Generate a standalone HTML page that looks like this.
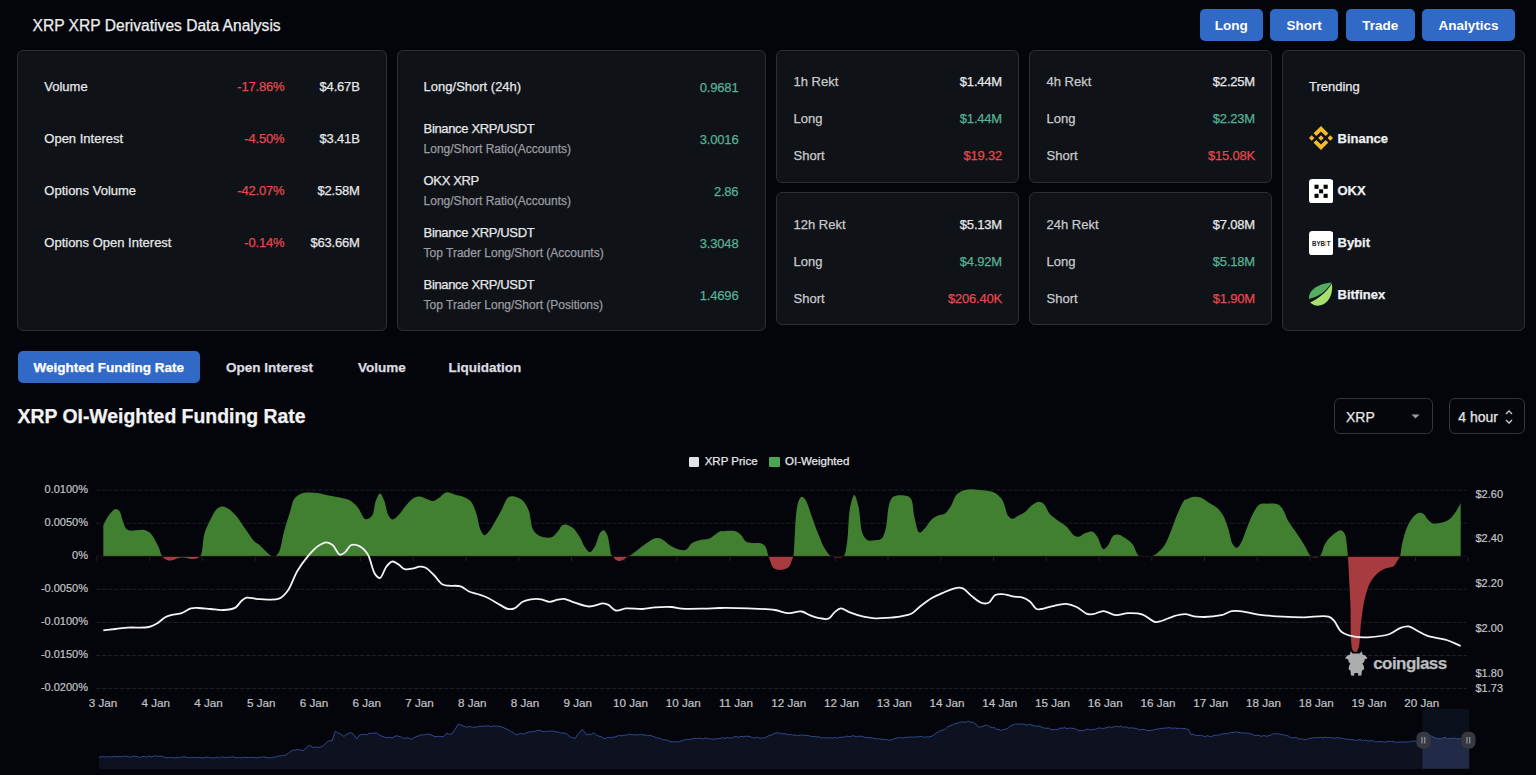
<!DOCTYPE html>
<html><head><meta charset="utf-8"><title>XRP Derivatives</title>
<style>
html,body{margin:0;padding:0;}
body{width:1536px;height:775px;overflow:hidden;background:#04050a;position:relative;font-family:"Liberation Sans",sans-serif;}
.t{position:absolute;white-space:nowrap;-webkit-text-stroke:0.25px currentColor;}
.card{position:absolute;background:#0f1217;border:1px solid #2b2e34;border-radius:6px;}
.btn{position:absolute;background:#3169c6;border-radius:5px;color:#fff;font-weight:bold;font-size:13.5px;line-height:34.6px;text-align:center;}
.tabsel{position:absolute;background:#3169c6;border-radius:5px;}
.sel{position:absolute;border:1px solid #34363c;border-radius:6px;background:#05060b;}
</style></head><body>
<div class="t" style="left:32.5px;top:17.8px;font-size:15.6px;line-height:15.6px;color:#eceef0;font-weight:normal;">XRP XRP Derivatives Data Analysis</div>
<div class="btn" style="left:1199.7px;top:8.8px;width:63.0px;height:31.8px">Long</div>
<div class="btn" style="left:1270.4px;top:8.8px;width:67.6px;height:31.8px">Short</div>
<div class="btn" style="left:1345.7px;top:8.8px;width:69.1px;height:31.8px">Trade</div>
<div class="btn" style="left:1422.2px;top:8.8px;width:92.7px;height:31.8px">Analytics</div>
<div class="card" style="left:17px;top:50px;width:367.5px;height:279.0px"></div>
<div class="card" style="left:397px;top:50px;width:367.0px;height:279.0px"></div>
<div class="card" style="left:776px;top:50px;width:240.5px;height:130.5px"></div>
<div class="card" style="left:776px;top:192px;width:240.5px;height:130.5px"></div>
<div class="card" style="left:1029px;top:50px;width:240.5px;height:130.5px"></div>
<div class="card" style="left:1029px;top:192px;width:240.5px;height:130.5px"></div>
<div class="card" style="left:1282px;top:50px;width:240.5px;height:279.0px"></div>
<div class="t" style="left:44.3px;top:80.3px;font-size:13px;line-height:13px;color:#e6e7e9;font-weight:normal;">Volume</div>
<div class="t" style="right:1251.7px;top:80.3px;font-size:13px;line-height:13px;color:#e5484d;font-weight:normal;letter-spacing:-0.2px;">-17.86%</div>
<div class="t" style="right:1176.4px;top:80.3px;font-size:13px;line-height:13px;color:#e6e7e9;font-weight:normal;letter-spacing:-0.2px;">$4.67B</div>
<div class="t" style="left:44.3px;top:132.3px;font-size:13px;line-height:13px;color:#e6e7e9;font-weight:normal;">Open Interest</div>
<div class="t" style="right:1251.7px;top:132.3px;font-size:13px;line-height:13px;color:#e5484d;font-weight:normal;letter-spacing:-0.2px;">-4.50%</div>
<div class="t" style="right:1176.4px;top:132.3px;font-size:13px;line-height:13px;color:#e6e7e9;font-weight:normal;letter-spacing:-0.2px;">$3.41B</div>
<div class="t" style="left:44.3px;top:184.3px;font-size:13px;line-height:13px;color:#e6e7e9;font-weight:normal;">Options Volume</div>
<div class="t" style="right:1251.7px;top:184.3px;font-size:13px;line-height:13px;color:#e5484d;font-weight:normal;letter-spacing:-0.2px;">-42.07%</div>
<div class="t" style="right:1176.4px;top:184.3px;font-size:13px;line-height:13px;color:#e6e7e9;font-weight:normal;letter-spacing:-0.2px;">$2.58M</div>
<div class="t" style="left:44.3px;top:236.3px;font-size:13px;line-height:13px;color:#e6e7e9;font-weight:normal;">Options Open Interest</div>
<div class="t" style="right:1251.7px;top:236.3px;font-size:13px;line-height:13px;color:#e5484d;font-weight:normal;letter-spacing:-0.2px;">-0.14%</div>
<div class="t" style="right:1176.4px;top:236.3px;font-size:13px;line-height:13px;color:#e6e7e9;font-weight:normal;letter-spacing:-0.2px;">$63.66M</div>
<div class="t" style="left:423.6px;top:80.0px;font-size:13px;line-height:13px;color:#e6e7e9;font-weight:normal;">Long/Short (24h)</div>
<div class="t" style="right:797.6px;top:80.5px;font-size:13px;line-height:13px;color:#56b194;font-weight:normal;letter-spacing:-0.2px;">0.9681</div>
<div class="t" style="left:423.6px;top:122.0px;font-size:13px;line-height:13px;color:#e6e7e9;font-weight:normal;letter-spacing:-0.35px">Binance XRP/USDT</div>
<div class="t" style="left:423.6px;top:142.8px;font-size:12px;line-height:12px;color:#9a9ca1;font-weight:normal;">Long/Short Ratio(Accounts)</div>
<div class="t" style="right:797.6px;top:132.5px;font-size:13px;line-height:13px;color:#56b194;font-weight:normal;letter-spacing:-0.2px;">3.0016</div>
<div class="t" style="left:423.6px;top:174.0px;font-size:13px;line-height:13px;color:#e6e7e9;font-weight:normal;letter-spacing:-0.35px">OKX XRP</div>
<div class="t" style="left:423.6px;top:194.8px;font-size:12px;line-height:12px;color:#9a9ca1;font-weight:normal;">Long/Short Ratio(Accounts)</div>
<div class="t" style="right:797.6px;top:184.5px;font-size:13px;line-height:13px;color:#56b194;font-weight:normal;letter-spacing:-0.2px;">2.86</div>
<div class="t" style="left:423.6px;top:226.0px;font-size:13px;line-height:13px;color:#e6e7e9;font-weight:normal;letter-spacing:-0.35px">Binance XRP/USDT</div>
<div class="t" style="left:423.6px;top:246.8px;font-size:12px;line-height:12px;color:#9a9ca1;font-weight:normal;">Top Trader Long/Short (Accounts)</div>
<div class="t" style="right:797.6px;top:236.5px;font-size:13px;line-height:13px;color:#56b194;font-weight:normal;letter-spacing:-0.2px;">3.3048</div>
<div class="t" style="left:423.6px;top:278.0px;font-size:13px;line-height:13px;color:#e6e7e9;font-weight:normal;letter-spacing:-0.35px">Binance XRP/USDT</div>
<div class="t" style="left:423.6px;top:298.8px;font-size:12px;line-height:12px;color:#9a9ca1;font-weight:normal;">Top Trader Long/Short (Positions)</div>
<div class="t" style="right:797.6px;top:288.5px;font-size:13px;line-height:13px;color:#56b194;font-weight:normal;letter-spacing:-0.2px;">1.4696</div>
<div class="t" style="left:793.5px;top:75.2px;font-size:13px;line-height:13px;color:#c9cacd;font-weight:normal;">1h Rekt</div>
<div class="t" style="right:534.0px;top:75.2px;font-size:13px;line-height:13px;color:#e6e7e9;font-weight:normal;letter-spacing:-0.2px;">$1.44M</div>
<div class="t" style="left:793.5px;top:112.1px;font-size:13px;line-height:13px;color:#c9cacd;font-weight:normal;">Long</div>
<div class="t" style="right:534.0px;top:112.1px;font-size:13px;line-height:13px;color:#56b194;font-weight:normal;letter-spacing:-0.2px;">$1.44M</div>
<div class="t" style="left:793.5px;top:149.2px;font-size:13px;line-height:13px;color:#c9cacd;font-weight:normal;">Short</div>
<div class="t" style="right:534.0px;top:149.2px;font-size:13px;line-height:13px;color:#e5484d;font-weight:normal;letter-spacing:-0.2px;">$19.32</div>
<div class="t" style="left:1046.5px;top:75.2px;font-size:13px;line-height:13px;color:#c9cacd;font-weight:normal;">4h Rekt</div>
<div class="t" style="right:281.0px;top:75.2px;font-size:13px;line-height:13px;color:#e6e7e9;font-weight:normal;letter-spacing:-0.2px;">$2.25M</div>
<div class="t" style="left:1046.5px;top:112.1px;font-size:13px;line-height:13px;color:#c9cacd;font-weight:normal;">Long</div>
<div class="t" style="right:281.0px;top:112.1px;font-size:13px;line-height:13px;color:#56b194;font-weight:normal;letter-spacing:-0.2px;">$2.23M</div>
<div class="t" style="left:1046.5px;top:149.2px;font-size:13px;line-height:13px;color:#c9cacd;font-weight:normal;">Short</div>
<div class="t" style="right:281.0px;top:149.2px;font-size:13px;line-height:13px;color:#e5484d;font-weight:normal;letter-spacing:-0.2px;">$15.08K</div>
<div class="t" style="left:793.5px;top:217.9px;font-size:13px;line-height:13px;color:#c9cacd;font-weight:normal;">12h Rekt</div>
<div class="t" style="right:534.0px;top:217.9px;font-size:13px;line-height:13px;color:#e6e7e9;font-weight:normal;letter-spacing:-0.2px;">$5.13M</div>
<div class="t" style="left:793.5px;top:254.8px;font-size:13px;line-height:13px;color:#c9cacd;font-weight:normal;">Long</div>
<div class="t" style="right:534.0px;top:254.8px;font-size:13px;line-height:13px;color:#56b194;font-weight:normal;letter-spacing:-0.2px;">$4.92M</div>
<div class="t" style="left:793.5px;top:291.9px;font-size:13px;line-height:13px;color:#c9cacd;font-weight:normal;">Short</div>
<div class="t" style="right:534.0px;top:291.9px;font-size:13px;line-height:13px;color:#e5484d;font-weight:normal;letter-spacing:-0.2px;">$206.40K</div>
<div class="t" style="left:1046.5px;top:217.9px;font-size:13px;line-height:13px;color:#c9cacd;font-weight:normal;">24h Rekt</div>
<div class="t" style="right:281.0px;top:217.9px;font-size:13px;line-height:13px;color:#e6e7e9;font-weight:normal;letter-spacing:-0.2px;">$7.08M</div>
<div class="t" style="left:1046.5px;top:254.8px;font-size:13px;line-height:13px;color:#c9cacd;font-weight:normal;">Long</div>
<div class="t" style="right:281.0px;top:254.8px;font-size:13px;line-height:13px;color:#56b194;font-weight:normal;letter-spacing:-0.2px;">$5.18M</div>
<div class="t" style="left:1046.5px;top:291.9px;font-size:13px;line-height:13px;color:#c9cacd;font-weight:normal;">Short</div>
<div class="t" style="right:281.0px;top:291.9px;font-size:13px;line-height:13px;color:#e5484d;font-weight:normal;letter-spacing:-0.2px;">$1.90M</div>
<div class="t" style="left:1309.0px;top:80.0px;font-size:13px;line-height:13px;color:#e6e7e9;font-weight:normal;">Trending</div>
<div class="t" style="left:1337.5px;top:132.3px;font-size:13px;line-height:13px;color:#eef0f2;font-weight:bold;">Binance</div>
<div class="t" style="left:1337.5px;top:184.3px;font-size:13px;line-height:13px;color:#eef0f2;font-weight:bold;">OKX</div>
<div class="t" style="left:1337.5px;top:236.3px;font-size:13px;line-height:13px;color:#eef0f2;font-weight:bold;">Bybit</div>
<div class="t" style="left:1337.5px;top:288.3px;font-size:13px;line-height:13px;color:#eef0f2;font-weight:bold;">Bitfinex</div>
<svg style="position:absolute;left:1308.6px;top:126.4px" width="24" height="24" viewBox="0 0 126.61 126.61"><g fill="#f3ba2f"><path d="M38.73 53.2l24.59-24.58 24.6 24.6 14.3-14.31L63.32 0 24.43 38.9l14.3 14.3zM0 63.31l14.3-14.31 14.31 14.31-14.31 14.3zM38.73 73.41l24.59 24.59 24.6-24.6 14.31 14.29-38.9 38.91-38.91-38.88-.02-.02zM98 63.31l14.3-14.31 14.31 14.3-14.31 14.32z"/><path d="M77.83 63.3L63.32 48.78 52.59 59.51l-1.24 1.23-2.54 2.54-.02.02.02.03 14.51 14.5 14.51-14.52.01-.01-.01-.01z"/></g></svg>
<svg style="position:absolute;left:1308.5px;top:178.5px" width="24.4" height="24.4" viewBox="0 0 24.4 24.4"><rect x="0" y="0" width="24.4" height="24.4" rx="3.5" fill="#fff"/><g fill="#000"><rect x="5.5" y="5.7" width="4.1" height="4.1"/><rect x="14.6" y="5.7" width="4.1" height="4.1"/><rect x="10.1" y="10.3" width="4" height="4"/><rect x="5.5" y="14.8" width="4.1" height="4.1"/><rect x="14.6" y="14.8" width="4.1" height="4.1"/></g></svg>
<svg style="position:absolute;left:1308.5px;top:230.5px" width="24.4" height="24.4" viewBox="0 0 24.4 24.4"><rect x="0" y="0" width="24.4" height="24.4" rx="3.5" fill="#fff"/><text x="3" y="14.9" font-family="Liberation Sans" font-weight="bold" font-size="6.6" fill="#15192a" textLength="18.4" lengthAdjust="spacingAndGlyphs">BYB<tspan fill="#f7a600">I</tspan>T</text></svg>
<svg style="position:absolute;left:1302px;top:276px" width="40" height="36" viewBox="0 0 40 36"><path d="M29.8 6.6 C21 7.2 10 11 7.3 19 C6.8 20.5 6.9 21.8 7.1 22.9 C15 21.5 24 16 29.8 6.6 Z" fill="#53ae63"/><path d="M29.9 7.6 C24.5 16.5 16 22.8 8.2 26.6 C11 29.8 16.5 30.6 21 28.6 C28 25.5 31.2 16 29.9 7.6 Z" fill="#a7e06f"/></svg>
<div class="tabsel" style="left:17.5px;top:350.9px;width:182.3px;height:31.8px"></div>
<div class="t" style="left:33.5px;top:361.4px;font-size:13.5px;line-height:13.5px;color:#ffffff;font-weight:bold;">Weighted Funding Rate</div>
<div class="t" style="left:226.0px;top:361.4px;font-size:13.5px;line-height:13.5px;color:#dcdde0;font-weight:bold;">Open Interest</div>
<div class="t" style="left:358.0px;top:361.4px;font-size:13.5px;line-height:13.5px;color:#dcdde0;font-weight:bold;">Volume</div>
<div class="t" style="left:448.4px;top:361.4px;font-size:13.5px;line-height:13.5px;color:#dcdde0;font-weight:bold;">Liquidation</div>
<div class="t" style="left:17.5px;top:406.8px;font-size:19.4px;line-height:19.4px;color:#f2f3f5;font-weight:bold;">XRP OI-Weighted Funding Rate</div>
<div class="sel" style="left:1333.8px;top:398.4px;width:97.6px;height:33.6px"></div>
<div class="t" style="left:1346.0px;top:410.4px;font-size:14px;line-height:14px;color:#e6e7e9;font-weight:normal;">XRP</div>
<svg style="position:absolute;left:1411px;top:414px" width="9" height="5" viewBox="0 0 9 5"><path d="M0.5 0.5 L8.5 0.5 L4.5 4.5 Z" fill="#9c9ea3"/></svg>
<div class="sel" style="left:1449.4px;top:398.4px;width:73.2px;height:33.6px"></div>
<div class="t" style="left:1458.3px;top:410.4px;font-size:14px;line-height:14px;color:#e6e7e9;font-weight:normal;">4 hour</div>
<svg style="position:absolute;left:1504px;top:409px" width="10" height="16" viewBox="0 0 10 16"><path d="M2 5 L5 2 L8 5 M2 11 L5 14 L8 11" fill="none" stroke="#c9cacd" stroke-width="1.3"/></svg>
<div style="position:absolute;left:689.3px;top:457.1px;width:10px;height:10px;background:#dfe2e8;border-radius:1px"></div>
<div class="t" style="left:704.7px;top:455.8px;font-size:11.5px;line-height:11.5px;color:#e6e7e9;font-weight:normal;">XRP Price</div>
<div style="position:absolute;left:769.3px;top:457.1px;width:10.3px;height:10px;background:#4ca552;border-radius:1px"></div>
<div class="t" style="left:785.0px;top:455.8px;font-size:11.5px;line-height:11.5px;color:#e6e7e9;font-weight:normal;">OI-Weighted</div>
<div class="t" style="left:1373.2px;top:654.9px;font-size:17px;line-height:17px;color:#bcbdbf;font-weight:bold;letter-spacing:-0.55px;z-index:2">coinglass</div>
<svg style="position:absolute;left:1340px;top:645px;z-index:2;opacity:0.95" width="30" height="33" viewBox="0 0 30 33"><path fill="#b5b6b8" d="M10.6 6.2 L12.6 8.6 L19.6 8.6 L21.8 6.2 L22.6 9.6 L25.2 10.6 L27.6 13.2 L24.6 14.6 L24.2 17 L22.4 18.4 L23.8 21 L24.2 24.2 L22 25.4 L21.4 30.6 L18.4 30.8 L17.8 28 L14.6 28 L14 30.8 L11 30.6 L10.4 25.4 L8.6 24.4 L9 21 L10.4 18.4 L8.6 17 L8.2 14.6 L5 13.2 L7.4 10.6 L10 9.6 Z"/></svg>

<svg width="1536" height="775" viewBox="0 0 1536 775" style="position:absolute;left:0;top:0">
<defs>
<clipPath id="up"><rect x="0" y="0" width="1536" height="556.4"/></clipPath>
<clipPath id="dn"><rect x="0" y="556.4" width="1536" height="300"/></clipPath>
</defs>
<line x1="96" y1="490.1" x2="1467" y2="490.1" stroke="#1d1f26" stroke-width="1" stroke-dasharray="4.5 1.5"/><line x1="96" y1="523.2" x2="1467" y2="523.2" stroke="#1d1f26" stroke-width="1" stroke-dasharray="4.5 1.5"/><line x1="96" y1="556.3" x2="1467" y2="556.3" stroke="#1d1f26" stroke-width="1" stroke-dasharray="4.5 1.5"/><line x1="96" y1="589.3" x2="1467" y2="589.3" stroke="#1d1f26" stroke-width="1" stroke-dasharray="4.5 1.5"/><line x1="96" y1="622.4" x2="1467" y2="622.4" stroke="#1d1f26" stroke-width="1" stroke-dasharray="4.5 1.5"/><line x1="96" y1="655.5" x2="1467" y2="655.5" stroke="#1d1f26" stroke-width="1" stroke-dasharray="4.5 1.5"/><line x1="96" y1="688.6" x2="1467" y2="688.6" stroke="#1d1f26" stroke-width="1" stroke-dasharray="4.5 1.5"/>
<line x1="96.8" y1="557" x2="96.8" y2="561" stroke="#202228" stroke-width="1"/><line x1="149.6" y1="557" x2="149.6" y2="561" stroke="#202228" stroke-width="1"/><line x1="202.3" y1="557" x2="202.3" y2="561" stroke="#202228" stroke-width="1"/><line x1="255.1" y1="557" x2="255.1" y2="561" stroke="#202228" stroke-width="1"/><line x1="307.8" y1="557" x2="307.8" y2="561" stroke="#202228" stroke-width="1"/><line x1="360.6" y1="557" x2="360.6" y2="561" stroke="#202228" stroke-width="1"/><line x1="413.3" y1="557" x2="413.3" y2="561" stroke="#202228" stroke-width="1"/><line x1="466.1" y1="557" x2="466.1" y2="561" stroke="#202228" stroke-width="1"/><line x1="518.8" y1="557" x2="518.8" y2="561" stroke="#202228" stroke-width="1"/><line x1="571.5" y1="557" x2="571.5" y2="561" stroke="#202228" stroke-width="1"/><line x1="624.3" y1="557" x2="624.3" y2="561" stroke="#202228" stroke-width="1"/><line x1="677.0" y1="557" x2="677.0" y2="561" stroke="#202228" stroke-width="1"/><line x1="729.8" y1="557" x2="729.8" y2="561" stroke="#202228" stroke-width="1"/><line x1="782.5" y1="557" x2="782.5" y2="561" stroke="#202228" stroke-width="1"/><line x1="835.3" y1="557" x2="835.3" y2="561" stroke="#202228" stroke-width="1"/><line x1="888.0" y1="557" x2="888.0" y2="561" stroke="#202228" stroke-width="1"/><line x1="940.8" y1="557" x2="940.8" y2="561" stroke="#202228" stroke-width="1"/><line x1="993.5" y1="557" x2="993.5" y2="561" stroke="#202228" stroke-width="1"/><line x1="1046.3" y1="557" x2="1046.3" y2="561" stroke="#202228" stroke-width="1"/><line x1="1099.0" y1="557" x2="1099.0" y2="561" stroke="#202228" stroke-width="1"/><line x1="1151.8" y1="557" x2="1151.8" y2="561" stroke="#202228" stroke-width="1"/><line x1="1204.5" y1="557" x2="1204.5" y2="561" stroke="#202228" stroke-width="1"/><line x1="1257.3" y1="557" x2="1257.3" y2="561" stroke="#202228" stroke-width="1"/><line x1="1310.0" y1="557" x2="1310.0" y2="561" stroke="#202228" stroke-width="1"/><line x1="1362.8" y1="557" x2="1362.8" y2="561" stroke="#202228" stroke-width="1"/><line x1="1415.5" y1="557" x2="1415.5" y2="561" stroke="#202228" stroke-width="1"/><line x1="1468.3" y1="557" x2="1468.3" y2="561" stroke="#202228" stroke-width="1"/>
<path d="M103.3,556.4L103.30,525.40C104.67,522.67 105.90,519.56 107.40,517.20C108.67,515.20 110.04,513.44 111.50,512.00C112.79,510.74 114.23,509.00 115.60,508.90C116.86,508.81 118.34,509.73 119.40,511.00C121.08,513.01 121.71,518.19 122.90,521.30C123.91,523.94 124.56,526.94 126.00,528.50C127.10,529.68 128.46,530.27 130.00,530.60C131.82,530.99 134.06,530.30 136.30,530.20C138.85,530.09 142.13,529.47 144.50,530.00C146.49,530.44 148.12,531.25 149.70,532.60C151.67,534.28 153.35,537.34 154.90,539.90C156.46,542.47 157.79,545.28 159.00,548.00C160.18,550.65 160.47,553.89 162.10,556.00C163.64,558.00 165.69,559.97 168.30,560.50C171.79,561.21 177.31,557.62 181.70,557.40C185.87,557.20 190.64,559.53 194.00,559.00C196.52,558.60 198.68,558.11 200.30,556.00C203.22,552.19 202.43,540.24 204.40,533.70C206.05,528.25 208.37,523.55 210.60,519.20C212.54,515.40 214.48,511.02 216.80,508.90C218.41,507.43 220.25,506.54 222.00,506.40C223.68,506.26 225.31,506.92 227.10,507.90C229.68,509.31 232.79,512.26 235.40,515.10C238.34,518.30 240.64,522.33 243.60,526.40C247.08,531.18 252.13,539.36 255.00,542.00C256.28,543.18 256.92,542.96 258.30,544.00C261.18,546.17 267.39,553.64 270.60,555.40C272.23,556.30 273.50,556.86 274.80,556.50C276.31,556.08 277.70,554.46 278.90,552.30C281.19,548.18 282.11,538.47 284.00,531.60C285.90,524.70 288.39,516.99 290.30,511.00C291.78,506.34 292.19,501.62 294.40,498.60C296.22,496.11 298.70,494.42 301.60,493.40C305.03,492.20 309.88,492.55 314.00,492.80C318.15,493.05 322.46,494.17 326.40,494.90C330.00,495.57 333.12,496.20 336.70,497.00C340.65,497.88 345.56,498.23 349.10,500.00C352.33,501.62 354.75,503.97 357.30,506.80C360.32,510.15 362.68,518.43 365.60,519.20C367.59,519.73 370.20,518.07 371.80,516.10C374.24,513.10 374.22,504.70 375.90,500.60C377.11,497.65 378.62,493.41 380.00,493.40C381.39,493.39 382.96,497.69 384.20,500.60C385.86,504.51 386.45,511.78 388.30,515.10C389.47,517.21 390.81,519.44 392.40,519.60C394.18,519.78 396.65,517.00 398.60,515.10C400.89,512.88 402.65,509.53 405.00,506.80C407.51,503.89 410.50,499.86 413.30,498.20C415.35,496.98 417.45,496.43 419.50,496.50C421.55,496.57 423.48,497.87 425.60,498.60C427.92,499.40 430.71,501.24 432.90,501.10C434.78,500.98 436.15,499.73 438.00,498.60C440.50,497.07 443.40,492.97 446.30,492.40C448.92,491.88 451.61,493.71 454.50,494.50C457.77,495.39 461.97,496.13 464.90,497.50C467.34,498.64 469.36,499.63 471.10,501.70C473.34,504.36 474.73,508.81 476.20,513.00C477.92,517.91 478.57,525.52 480.40,529.50C481.59,532.07 482.96,535.14 484.50,535.30C486.03,535.46 487.96,532.62 489.60,530.60C491.76,527.95 493.77,523.84 495.80,520.30C497.91,516.62 499.93,512.70 502.00,508.90C504.07,505.10 505.60,499.34 508.20,497.50C510.01,496.22 512.24,496.17 514.40,496.50C517.03,496.90 520.38,498.46 522.70,500.60C525.35,503.05 527.27,506.88 528.90,511.00C530.94,516.15 530.64,525.20 533.00,529.50C534.61,532.43 536.50,534.38 539.20,535.70C542.43,537.27 548.35,538.23 551.60,537.20C554.26,536.36 556.05,533.63 557.80,531.60C559.45,529.68 560.39,526.53 561.90,525.40C562.93,524.63 563.90,524.33 565.20,524.40C567.15,524.51 570.20,525.79 572.40,527.50C575.10,529.59 577.53,533.52 579.60,536.80C581.65,540.05 582.84,544.36 584.80,547.10C586.36,549.27 588.23,552.37 589.90,552.30C591.66,552.23 593.55,548.72 595.10,546.10C597.17,542.59 598.29,535.14 600.30,532.60C601.39,531.22 602.71,529.99 603.80,530.20C605.16,530.46 606.43,533.16 607.50,535.70C609.36,540.12 609.97,553.41 611.60,555.40C612.05,555.95 612.55,555.61 613.00,556.00C613.71,556.62 614.09,558.47 615.00,559.30C615.92,560.14 617.27,560.84 618.50,561.00C619.76,561.16 621.26,560.72 622.50,560.20C623.76,559.67 625.00,558.57 626.00,557.80C626.81,557.18 627.35,556.40 628.10,556.00C628.76,555.64 629.32,555.84 630.20,555.40C632.10,554.45 635.66,551.26 638.40,549.20C641.16,547.13 643.88,544.86 646.70,543.00C649.42,541.21 652.35,538.78 655.00,538.20C657.14,537.74 659.11,537.98 661.20,538.80C663.89,539.85 666.41,543.20 669.40,545.00C672.55,546.89 676.63,549.12 679.70,549.80C681.97,550.30 684.00,550.64 685.90,549.80C688.21,548.78 689.65,544.65 692.10,543.00C694.50,541.38 697.60,540.60 700.40,539.90C703.10,539.22 705.77,539.87 708.60,538.80C712.24,537.43 718.09,531.78 720.00,531.20C720.57,531.03 720.58,531.20 721.20,531.20C723.35,531.20 732.11,530.13 735.60,531.20C737.90,531.90 739.18,533.18 740.80,534.70C742.69,536.48 743.91,540.14 746.00,541.50C747.80,542.67 749.91,542.65 752.20,543.00C754.95,543.42 759.04,542.66 761.40,543.60C763.22,544.33 764.51,545.45 765.60,547.10C767.02,549.25 767.44,553.47 768.30,556.00C768.95,557.92 769.53,559.27 770.20,561.00C770.92,562.86 771.33,565.35 772.50,566.80C773.52,568.07 774.89,569.01 776.50,569.50C778.44,570.09 781.38,569.98 783.50,569.50C785.44,569.06 787.49,568.31 788.80,567.00C790.14,565.66 790.63,563.35 791.40,561.50C792.16,559.68 792.95,558.03 793.40,556.00C793.93,553.64 793.82,551.71 794.10,548.10C794.70,540.29 795.24,519.68 796.50,511.00C797.19,506.22 797.69,502.46 799.00,500.00C799.82,498.46 800.96,496.87 802.00,496.80C802.97,496.73 804.14,498.15 805.00,499.20C806.03,500.45 806.63,501.96 807.50,504.00C808.90,507.27 810.34,512.57 812.00,517.20C813.87,522.41 816.07,528.41 818.20,533.70C820.21,538.69 822.05,544.14 824.40,548.10C826.28,551.27 828.33,554.52 830.60,556.00C832.29,557.11 834.22,557.17 836.00,557.40C837.68,557.61 839.57,557.72 841.00,557.40C842.16,557.14 843.16,557.04 844.00,556.00C845.75,553.82 846.21,547.69 847.10,541.90C848.49,532.86 848.38,515.33 850.20,506.80C851.29,501.70 852.92,494.91 854.30,494.90C855.68,494.89 857.29,501.97 858.50,506.80C860.28,513.90 860.11,527.95 862.60,533.70C863.99,536.89 865.62,539.24 867.80,540.30C869.82,541.28 872.69,540.57 875.00,540.30C877.21,540.04 879.73,540.19 881.40,538.80C883.48,537.07 884.33,533.50 885.50,529.50C887.40,522.97 887.42,508.36 889.60,502.70C890.74,499.74 891.49,497.73 893.70,496.50C896.67,494.84 904.13,495.02 907.20,496.10C909.14,496.78 910.22,497.70 911.30,499.60C913.27,503.05 912.98,511.58 914.40,517.20C915.75,522.56 917.18,531.90 919.50,532.60C920.98,533.04 922.94,530.28 924.70,528.50C927.05,526.13 929.37,521.44 931.90,519.20C933.88,517.44 935.96,516.35 938.10,515.50C940.10,514.70 942.41,515.25 944.30,514.10C946.63,512.69 948.59,509.68 950.50,506.80C952.79,503.34 953.94,497.37 956.70,494.50C958.99,492.12 961.73,490.75 965.00,489.90C969.03,488.86 974.61,489.49 979.40,489.90C984.24,490.31 989.96,490.52 993.90,492.40C997.29,494.02 999.85,496.35 1002.10,499.60C1004.95,503.73 1005.89,513.08 1008.30,516.10C1009.57,517.69 1010.87,518.73 1012.40,518.80C1014.23,518.89 1016.52,516.62 1018.60,515.50C1020.72,514.36 1022.99,513.51 1025.00,512.00C1027.21,510.35 1028.93,507.53 1031.20,505.80C1033.41,504.12 1036.16,501.87 1038.40,501.70C1040.24,501.56 1042.00,502.35 1043.60,503.70C1045.96,505.69 1047.47,511.39 1049.80,514.10C1051.69,516.30 1053.63,517.40 1056.00,519.20C1058.96,521.45 1063.21,523.64 1066.30,526.40C1069.37,529.14 1072.00,534.16 1074.50,535.70C1075.98,536.61 1077.21,536.99 1078.70,536.80C1080.61,536.55 1082.69,534.16 1084.90,533.30C1087.15,532.42 1090.03,531.01 1092.10,531.60C1094.16,532.19 1095.67,534.53 1097.30,536.80C1099.53,539.92 1101.22,548.67 1103.40,549.20C1104.74,549.53 1106.22,547.64 1107.60,546.10C1109.72,543.72 1111.38,536.90 1113.80,535.30C1115.35,534.27 1117.11,534.34 1118.90,534.70C1121.19,535.16 1123.93,537.23 1126.20,538.80C1128.43,540.34 1130.54,541.70 1132.40,544.00C1134.76,546.90 1136.19,553.49 1138.50,555.40C1139.90,556.55 1141.31,556.54 1143.00,556.80C1145.06,557.11 1147.90,557.22 1150.00,556.80C1151.85,556.43 1153.23,555.83 1155.00,554.70C1157.55,553.07 1160.96,550.20 1163.30,547.10C1165.89,543.66 1167.40,539.47 1169.50,534.70C1172.22,528.53 1174.92,519.29 1177.80,513.00C1180.13,507.91 1183.36,500.58 1185.00,499.60C1185.46,499.32 1185.66,499.71 1186.20,499.60C1187.48,499.35 1190.14,497.48 1192.40,497.10C1194.90,496.68 1197.96,496.67 1200.60,497.50C1203.48,498.40 1206.13,500.97 1208.90,502.70C1211.67,504.43 1214.80,505.70 1217.20,507.90C1219.66,510.15 1221.62,512.89 1223.40,516.10C1225.50,519.90 1226.98,524.91 1228.50,529.50C1230.06,534.20 1230.66,540.91 1232.60,544.00C1233.79,545.88 1235.45,547.79 1236.80,547.70C1238.22,547.61 1239.57,545.17 1240.90,543.00C1243.07,539.45 1245.00,532.57 1247.10,527.50C1249.14,522.57 1250.98,517.10 1253.30,513.00C1255.20,509.64 1256.97,505.85 1259.50,504.40C1261.59,503.20 1264.02,503.75 1266.70,503.70C1270.06,503.64 1275.24,503.05 1278.10,504.40C1280.42,505.50 1281.66,507.58 1283.20,509.90C1285.19,512.89 1286.21,517.45 1288.40,521.30C1290.90,525.70 1294.84,530.38 1297.70,534.70C1300.30,538.62 1302.74,542.47 1304.90,546.10C1306.82,549.33 1308.04,553.51 1310.10,555.40C1311.57,556.74 1313.32,557.57 1315.00,557.60C1316.75,557.63 1318.94,556.88 1320.40,555.40C1322.42,553.36 1322.73,548.15 1324.50,545.00C1326.20,541.98 1328.13,539.20 1330.70,536.80C1333.48,534.20 1338.25,529.95 1340.80,530.20C1342.56,530.37 1343.91,532.33 1344.90,534.20C1346.27,536.80 1346.30,541.42 1346.80,545.10C1347.31,548.85 1347.52,551.43 1347.90,556.50C1348.65,566.61 1349.47,586.57 1350.30,602.00C1351.16,617.98 1349.88,646.04 1353.00,650.80C1353.79,652.00 1354.96,652.43 1355.80,652.20C1356.85,651.92 1357.75,650.20 1358.50,648.10C1360.26,643.15 1360.03,629.78 1361.20,621.00C1362.32,612.63 1363.44,603.66 1365.30,596.60C1366.79,590.95 1368.24,585.93 1370.70,581.70C1372.88,577.95 1375.85,574.52 1378.80,572.20C1381.32,570.22 1384.27,569.12 1386.90,568.10C1389.22,567.20 1391.89,567.51 1393.70,566.20C1395.55,564.85 1396.65,561.78 1397.80,560.00C1398.66,558.67 1399.40,558.08 1400.00,556.50C1401.00,553.86 1401.03,549.13 1401.90,545.10C1402.91,540.44 1404.18,534.70 1405.90,530.20C1407.43,526.20 1409.16,522.27 1411.40,519.30C1413.33,516.73 1415.80,513.81 1418.10,513.10C1419.89,512.54 1422.06,512.98 1423.60,513.90C1425.29,514.91 1426.04,517.72 1427.60,519.30C1429.17,520.89 1430.88,522.77 1433.00,523.40C1435.34,524.09 1438.53,523.45 1441.20,522.80C1443.97,522.12 1446.90,521.09 1449.30,519.30C1451.93,517.34 1454.16,514.00 1456.10,511.20C1457.93,508.56 1459.17,505.73 1460.70,503.00L1460.7,556.4Z" fill="#408030" clip-path="url(#up)"/>
<path d="M103.3,556.4L103.30,525.40C104.67,522.67 105.90,519.56 107.40,517.20C108.67,515.20 110.04,513.44 111.50,512.00C112.79,510.74 114.23,509.00 115.60,508.90C116.86,508.81 118.34,509.73 119.40,511.00C121.08,513.01 121.71,518.19 122.90,521.30C123.91,523.94 124.56,526.94 126.00,528.50C127.10,529.68 128.46,530.27 130.00,530.60C131.82,530.99 134.06,530.30 136.30,530.20C138.85,530.09 142.13,529.47 144.50,530.00C146.49,530.44 148.12,531.25 149.70,532.60C151.67,534.28 153.35,537.34 154.90,539.90C156.46,542.47 157.79,545.28 159.00,548.00C160.18,550.65 160.47,553.89 162.10,556.00C163.64,558.00 165.69,559.97 168.30,560.50C171.79,561.21 177.31,557.62 181.70,557.40C185.87,557.20 190.64,559.53 194.00,559.00C196.52,558.60 198.68,558.11 200.30,556.00C203.22,552.19 202.43,540.24 204.40,533.70C206.05,528.25 208.37,523.55 210.60,519.20C212.54,515.40 214.48,511.02 216.80,508.90C218.41,507.43 220.25,506.54 222.00,506.40C223.68,506.26 225.31,506.92 227.10,507.90C229.68,509.31 232.79,512.26 235.40,515.10C238.34,518.30 240.64,522.33 243.60,526.40C247.08,531.18 252.13,539.36 255.00,542.00C256.28,543.18 256.92,542.96 258.30,544.00C261.18,546.17 267.39,553.64 270.60,555.40C272.23,556.30 273.50,556.86 274.80,556.50C276.31,556.08 277.70,554.46 278.90,552.30C281.19,548.18 282.11,538.47 284.00,531.60C285.90,524.70 288.39,516.99 290.30,511.00C291.78,506.34 292.19,501.62 294.40,498.60C296.22,496.11 298.70,494.42 301.60,493.40C305.03,492.20 309.88,492.55 314.00,492.80C318.15,493.05 322.46,494.17 326.40,494.90C330.00,495.57 333.12,496.20 336.70,497.00C340.65,497.88 345.56,498.23 349.10,500.00C352.33,501.62 354.75,503.97 357.30,506.80C360.32,510.15 362.68,518.43 365.60,519.20C367.59,519.73 370.20,518.07 371.80,516.10C374.24,513.10 374.22,504.70 375.90,500.60C377.11,497.65 378.62,493.41 380.00,493.40C381.39,493.39 382.96,497.69 384.20,500.60C385.86,504.51 386.45,511.78 388.30,515.10C389.47,517.21 390.81,519.44 392.40,519.60C394.18,519.78 396.65,517.00 398.60,515.10C400.89,512.88 402.65,509.53 405.00,506.80C407.51,503.89 410.50,499.86 413.30,498.20C415.35,496.98 417.45,496.43 419.50,496.50C421.55,496.57 423.48,497.87 425.60,498.60C427.92,499.40 430.71,501.24 432.90,501.10C434.78,500.98 436.15,499.73 438.00,498.60C440.50,497.07 443.40,492.97 446.30,492.40C448.92,491.88 451.61,493.71 454.50,494.50C457.77,495.39 461.97,496.13 464.90,497.50C467.34,498.64 469.36,499.63 471.10,501.70C473.34,504.36 474.73,508.81 476.20,513.00C477.92,517.91 478.57,525.52 480.40,529.50C481.59,532.07 482.96,535.14 484.50,535.30C486.03,535.46 487.96,532.62 489.60,530.60C491.76,527.95 493.77,523.84 495.80,520.30C497.91,516.62 499.93,512.70 502.00,508.90C504.07,505.10 505.60,499.34 508.20,497.50C510.01,496.22 512.24,496.17 514.40,496.50C517.03,496.90 520.38,498.46 522.70,500.60C525.35,503.05 527.27,506.88 528.90,511.00C530.94,516.15 530.64,525.20 533.00,529.50C534.61,532.43 536.50,534.38 539.20,535.70C542.43,537.27 548.35,538.23 551.60,537.20C554.26,536.36 556.05,533.63 557.80,531.60C559.45,529.68 560.39,526.53 561.90,525.40C562.93,524.63 563.90,524.33 565.20,524.40C567.15,524.51 570.20,525.79 572.40,527.50C575.10,529.59 577.53,533.52 579.60,536.80C581.65,540.05 582.84,544.36 584.80,547.10C586.36,549.27 588.23,552.37 589.90,552.30C591.66,552.23 593.55,548.72 595.10,546.10C597.17,542.59 598.29,535.14 600.30,532.60C601.39,531.22 602.71,529.99 603.80,530.20C605.16,530.46 606.43,533.16 607.50,535.70C609.36,540.12 609.97,553.41 611.60,555.40C612.05,555.95 612.55,555.61 613.00,556.00C613.71,556.62 614.09,558.47 615.00,559.30C615.92,560.14 617.27,560.84 618.50,561.00C619.76,561.16 621.26,560.72 622.50,560.20C623.76,559.67 625.00,558.57 626.00,557.80C626.81,557.18 627.35,556.40 628.10,556.00C628.76,555.64 629.32,555.84 630.20,555.40C632.10,554.45 635.66,551.26 638.40,549.20C641.16,547.13 643.88,544.86 646.70,543.00C649.42,541.21 652.35,538.78 655.00,538.20C657.14,537.74 659.11,537.98 661.20,538.80C663.89,539.85 666.41,543.20 669.40,545.00C672.55,546.89 676.63,549.12 679.70,549.80C681.97,550.30 684.00,550.64 685.90,549.80C688.21,548.78 689.65,544.65 692.10,543.00C694.50,541.38 697.60,540.60 700.40,539.90C703.10,539.22 705.77,539.87 708.60,538.80C712.24,537.43 718.09,531.78 720.00,531.20C720.57,531.03 720.58,531.20 721.20,531.20C723.35,531.20 732.11,530.13 735.60,531.20C737.90,531.90 739.18,533.18 740.80,534.70C742.69,536.48 743.91,540.14 746.00,541.50C747.80,542.67 749.91,542.65 752.20,543.00C754.95,543.42 759.04,542.66 761.40,543.60C763.22,544.33 764.51,545.45 765.60,547.10C767.02,549.25 767.44,553.47 768.30,556.00C768.95,557.92 769.53,559.27 770.20,561.00C770.92,562.86 771.33,565.35 772.50,566.80C773.52,568.07 774.89,569.01 776.50,569.50C778.44,570.09 781.38,569.98 783.50,569.50C785.44,569.06 787.49,568.31 788.80,567.00C790.14,565.66 790.63,563.35 791.40,561.50C792.16,559.68 792.95,558.03 793.40,556.00C793.93,553.64 793.82,551.71 794.10,548.10C794.70,540.29 795.24,519.68 796.50,511.00C797.19,506.22 797.69,502.46 799.00,500.00C799.82,498.46 800.96,496.87 802.00,496.80C802.97,496.73 804.14,498.15 805.00,499.20C806.03,500.45 806.63,501.96 807.50,504.00C808.90,507.27 810.34,512.57 812.00,517.20C813.87,522.41 816.07,528.41 818.20,533.70C820.21,538.69 822.05,544.14 824.40,548.10C826.28,551.27 828.33,554.52 830.60,556.00C832.29,557.11 834.22,557.17 836.00,557.40C837.68,557.61 839.57,557.72 841.00,557.40C842.16,557.14 843.16,557.04 844.00,556.00C845.75,553.82 846.21,547.69 847.10,541.90C848.49,532.86 848.38,515.33 850.20,506.80C851.29,501.70 852.92,494.91 854.30,494.90C855.68,494.89 857.29,501.97 858.50,506.80C860.28,513.90 860.11,527.95 862.60,533.70C863.99,536.89 865.62,539.24 867.80,540.30C869.82,541.28 872.69,540.57 875.00,540.30C877.21,540.04 879.73,540.19 881.40,538.80C883.48,537.07 884.33,533.50 885.50,529.50C887.40,522.97 887.42,508.36 889.60,502.70C890.74,499.74 891.49,497.73 893.70,496.50C896.67,494.84 904.13,495.02 907.20,496.10C909.14,496.78 910.22,497.70 911.30,499.60C913.27,503.05 912.98,511.58 914.40,517.20C915.75,522.56 917.18,531.90 919.50,532.60C920.98,533.04 922.94,530.28 924.70,528.50C927.05,526.13 929.37,521.44 931.90,519.20C933.88,517.44 935.96,516.35 938.10,515.50C940.10,514.70 942.41,515.25 944.30,514.10C946.63,512.69 948.59,509.68 950.50,506.80C952.79,503.34 953.94,497.37 956.70,494.50C958.99,492.12 961.73,490.75 965.00,489.90C969.03,488.86 974.61,489.49 979.40,489.90C984.24,490.31 989.96,490.52 993.90,492.40C997.29,494.02 999.85,496.35 1002.10,499.60C1004.95,503.73 1005.89,513.08 1008.30,516.10C1009.57,517.69 1010.87,518.73 1012.40,518.80C1014.23,518.89 1016.52,516.62 1018.60,515.50C1020.72,514.36 1022.99,513.51 1025.00,512.00C1027.21,510.35 1028.93,507.53 1031.20,505.80C1033.41,504.12 1036.16,501.87 1038.40,501.70C1040.24,501.56 1042.00,502.35 1043.60,503.70C1045.96,505.69 1047.47,511.39 1049.80,514.10C1051.69,516.30 1053.63,517.40 1056.00,519.20C1058.96,521.45 1063.21,523.64 1066.30,526.40C1069.37,529.14 1072.00,534.16 1074.50,535.70C1075.98,536.61 1077.21,536.99 1078.70,536.80C1080.61,536.55 1082.69,534.16 1084.90,533.30C1087.15,532.42 1090.03,531.01 1092.10,531.60C1094.16,532.19 1095.67,534.53 1097.30,536.80C1099.53,539.92 1101.22,548.67 1103.40,549.20C1104.74,549.53 1106.22,547.64 1107.60,546.10C1109.72,543.72 1111.38,536.90 1113.80,535.30C1115.35,534.27 1117.11,534.34 1118.90,534.70C1121.19,535.16 1123.93,537.23 1126.20,538.80C1128.43,540.34 1130.54,541.70 1132.40,544.00C1134.76,546.90 1136.19,553.49 1138.50,555.40C1139.90,556.55 1141.31,556.54 1143.00,556.80C1145.06,557.11 1147.90,557.22 1150.00,556.80C1151.85,556.43 1153.23,555.83 1155.00,554.70C1157.55,553.07 1160.96,550.20 1163.30,547.10C1165.89,543.66 1167.40,539.47 1169.50,534.70C1172.22,528.53 1174.92,519.29 1177.80,513.00C1180.13,507.91 1183.36,500.58 1185.00,499.60C1185.46,499.32 1185.66,499.71 1186.20,499.60C1187.48,499.35 1190.14,497.48 1192.40,497.10C1194.90,496.68 1197.96,496.67 1200.60,497.50C1203.48,498.40 1206.13,500.97 1208.90,502.70C1211.67,504.43 1214.80,505.70 1217.20,507.90C1219.66,510.15 1221.62,512.89 1223.40,516.10C1225.50,519.90 1226.98,524.91 1228.50,529.50C1230.06,534.20 1230.66,540.91 1232.60,544.00C1233.79,545.88 1235.45,547.79 1236.80,547.70C1238.22,547.61 1239.57,545.17 1240.90,543.00C1243.07,539.45 1245.00,532.57 1247.10,527.50C1249.14,522.57 1250.98,517.10 1253.30,513.00C1255.20,509.64 1256.97,505.85 1259.50,504.40C1261.59,503.20 1264.02,503.75 1266.70,503.70C1270.06,503.64 1275.24,503.05 1278.10,504.40C1280.42,505.50 1281.66,507.58 1283.20,509.90C1285.19,512.89 1286.21,517.45 1288.40,521.30C1290.90,525.70 1294.84,530.38 1297.70,534.70C1300.30,538.62 1302.74,542.47 1304.90,546.10C1306.82,549.33 1308.04,553.51 1310.10,555.40C1311.57,556.74 1313.32,557.57 1315.00,557.60C1316.75,557.63 1318.94,556.88 1320.40,555.40C1322.42,553.36 1322.73,548.15 1324.50,545.00C1326.20,541.98 1328.13,539.20 1330.70,536.80C1333.48,534.20 1338.25,529.95 1340.80,530.20C1342.56,530.37 1343.91,532.33 1344.90,534.20C1346.27,536.80 1346.30,541.42 1346.80,545.10C1347.31,548.85 1347.52,551.43 1347.90,556.50C1348.65,566.61 1349.47,586.57 1350.30,602.00C1351.16,617.98 1349.88,646.04 1353.00,650.80C1353.79,652.00 1354.96,652.43 1355.80,652.20C1356.85,651.92 1357.75,650.20 1358.50,648.10C1360.26,643.15 1360.03,629.78 1361.20,621.00C1362.32,612.63 1363.44,603.66 1365.30,596.60C1366.79,590.95 1368.24,585.93 1370.70,581.70C1372.88,577.95 1375.85,574.52 1378.80,572.20C1381.32,570.22 1384.27,569.12 1386.90,568.10C1389.22,567.20 1391.89,567.51 1393.70,566.20C1395.55,564.85 1396.65,561.78 1397.80,560.00C1398.66,558.67 1399.40,558.08 1400.00,556.50C1401.00,553.86 1401.03,549.13 1401.90,545.10C1402.91,540.44 1404.18,534.70 1405.90,530.20C1407.43,526.20 1409.16,522.27 1411.40,519.30C1413.33,516.73 1415.80,513.81 1418.10,513.10C1419.89,512.54 1422.06,512.98 1423.60,513.90C1425.29,514.91 1426.04,517.72 1427.60,519.30C1429.17,520.89 1430.88,522.77 1433.00,523.40C1435.34,524.09 1438.53,523.45 1441.20,522.80C1443.97,522.12 1446.90,521.09 1449.30,519.30C1451.93,517.34 1454.16,514.00 1456.10,511.20C1457.93,508.56 1459.17,505.73 1460.70,503.00L1460.7,556.4Z" fill="#a83b40" clip-path="url(#dn)"/>
<line x1="96" y1="556.4" x2="1467" y2="556.4" stroke="#1f0c12" stroke-width="1"/>
<path d="M103.30,630.30C107.40,629.87 111.49,629.45 115.60,629.00C119.73,628.55 123.33,627.93 128.00,627.60C134.01,627.17 143.43,628.15 148.70,627.00C152.18,626.24 154.33,625.04 157.00,623.50C159.85,621.86 162.34,618.80 165.20,617.30C167.82,615.92 170.63,615.28 173.40,614.60C176.13,613.92 178.93,614.12 181.70,613.20C184.79,612.17 188.01,609.21 191.00,608.40C193.48,607.72 195.48,607.97 198.20,608.00C201.78,608.04 206.47,608.67 210.60,609.00C214.73,609.33 218.88,610.23 223.00,610.00C227.15,609.77 232.19,609.40 235.40,607.60C238.14,606.06 239.51,602.52 241.60,600.80C243.28,599.41 244.71,598.13 246.70,597.70C249.06,597.19 252.54,598.46 255.00,598.70C256.96,598.89 257.99,599.04 260.30,599.10C264.61,599.22 274.17,600.52 278.90,598.70C282.53,597.30 284.60,594.86 287.20,591.50C290.98,586.62 293.81,576.95 297.50,570.80C300.73,565.42 304.18,560.67 307.80,556.40C311.08,552.53 314.63,548.51 318.10,546.10C320.85,544.19 323.83,542.32 326.40,542.30C328.61,542.28 330.65,543.45 332.60,545.00C335.21,547.07 337.33,554.07 339.80,554.70C341.50,555.13 343.33,553.57 345.00,552.30C347.17,550.66 348.68,545.97 351.20,545.00C353.54,544.10 356.85,544.85 359.40,546.10C362.43,547.59 365.35,550.65 367.70,554.30C370.84,559.19 372.09,569.99 374.90,573.90C376.47,576.09 378.39,578.31 380.00,578.00C382.27,577.56 383.93,569.59 386.30,566.70C388.17,564.42 390.27,561.76 392.40,561.50C394.38,561.26 396.59,563.36 398.60,564.60C400.73,565.91 402.43,568.54 404.80,569.20C407.30,569.90 410.71,568.87 413.30,568.40C415.55,567.99 417.43,566.81 419.50,566.70C421.53,566.59 423.55,566.73 425.60,567.70C428.34,569.00 431.21,572.33 433.90,575.00C436.75,577.83 439.36,582.63 442.20,584.30C444.23,585.49 445.97,585.37 448.40,585.70C451.79,586.16 457.13,585.18 460.70,586.30C463.89,587.30 466.14,590.20 469.00,591.50C471.69,592.72 474.40,593.04 477.30,594.00C480.56,595.08 484.08,596.06 487.60,597.70C491.62,599.57 496.26,602.88 500.00,604.90C502.99,606.51 505.59,608.52 508.20,609.00C510.35,609.40 512.31,609.24 514.40,608.40C517.13,607.30 519.79,603.33 522.70,601.80C525.32,600.42 527.97,599.74 530.90,599.30C534.13,598.82 538.07,598.82 541.30,599.30C544.23,599.74 546.75,601.73 549.50,601.80C552.25,601.87 555.21,600.19 557.80,599.70C560.03,599.28 561.88,598.67 564.10,598.90C566.71,599.17 569.14,600.77 572.40,601.80C576.95,603.24 583.56,606.32 588.90,606.50C593.87,606.67 599.81,603.26 603.40,603.40C605.55,603.48 606.74,604.00 608.50,604.90C610.80,606.08 612.91,609.84 615.70,610.50C618.71,611.21 622.21,608.72 626.10,608.40C630.95,608.00 637.50,609.23 642.60,609.00C647.04,608.80 650.56,607.74 655.00,607.40C660.10,607.01 666.66,606.69 671.50,607.00C675.35,607.25 677.68,608.28 681.80,608.60C687.88,609.07 697.65,608.73 704.50,608.60C710.16,608.49 714.07,608.07 720.00,608.00C727.96,607.90 738.76,608.06 748.00,608.40C757.06,608.73 767.69,608.87 774.90,610.00C779.87,610.78 782.98,612.91 787.30,613.20C791.89,613.51 797.63,610.88 801.70,611.50C804.92,611.99 807.21,614.12 810.00,615.20C812.72,616.25 815.27,617.31 818.20,617.90C821.40,618.54 825.70,619.78 828.50,618.70C831.12,617.68 832.50,613.87 834.70,612.10C836.66,610.52 838.65,608.53 840.90,608.40C843.43,608.25 846.02,610.89 849.20,612.10C853.31,613.67 859.04,615.66 863.60,616.70C867.58,617.61 871.18,618.10 875.00,618.30C878.82,618.50 882.45,618.19 886.50,617.90C891.06,617.57 896.60,617.07 901.00,616.30C904.75,615.64 908.22,615.35 911.30,613.80C914.39,612.25 916.44,609.36 919.50,607.00C923.16,604.17 927.84,600.51 931.90,598.10C935.43,596.01 938.51,594.70 942.30,593.10C946.67,591.25 952.85,588.30 956.70,587.80C959.15,587.48 960.83,587.51 962.90,588.40C965.65,589.58 968.22,593.28 971.20,595.60C974.39,598.09 978.22,601.77 981.50,602.80C983.99,603.58 986.59,603.80 988.70,602.80C991.16,601.63 992.45,596.58 994.90,595.20C997.01,594.01 999.38,594.13 1002.10,594.20C1005.68,594.30 1010.77,595.99 1014.50,596.60C1017.54,597.09 1020.19,596.84 1022.80,597.70C1025.42,598.57 1027.98,600.00 1030.20,601.80C1032.55,603.71 1034.19,607.99 1036.40,609.00C1038.02,609.74 1039.52,609.25 1041.50,609.00C1044.36,608.63 1048.05,607.10 1051.80,606.30C1056.20,605.36 1061.91,603.62 1066.30,603.90C1070.06,604.14 1073.28,605.44 1076.60,607.00C1080.16,608.67 1083.77,612.75 1086.90,613.80C1089.12,614.55 1090.80,614.46 1093.10,614.20C1096.13,613.85 1099.82,611.05 1103.40,611.10C1107.35,611.15 1111.63,614.87 1115.80,615.20C1119.89,615.53 1123.90,613.34 1128.20,613.20C1132.84,613.05 1138.22,613.12 1142.70,614.60C1147.15,616.07 1151.47,621.31 1155.00,622.00C1157.35,622.46 1158.89,621.64 1161.30,621.00C1164.76,620.07 1169.53,617.44 1173.60,616.30C1177.42,615.23 1181.20,614.14 1185.00,614.20C1188.83,614.26 1191.91,616.35 1196.50,616.70C1203.17,617.21 1214.91,616.63 1221.30,615.20C1225.57,614.25 1228.29,611.73 1231.60,611.10C1234.46,610.55 1236.60,610.79 1239.90,611.10C1244.86,611.57 1251.76,613.69 1258.40,614.60C1266.04,615.64 1275.30,616.25 1283.20,616.70C1290.41,617.11 1296.70,617.28 1303.90,617.30C1311.77,617.32 1323.56,615.16 1328.60,616.70C1331.16,617.48 1332.15,618.65 1333.80,620.40C1336.03,622.76 1338.03,628.08 1340.00,630.30C1341.24,631.70 1341.97,632.32 1343.60,633.20C1346.15,634.58 1350.54,636.00 1354.40,636.70C1358.62,637.46 1362.95,637.57 1368.00,637.30C1374.41,636.96 1383.87,636.04 1389.70,634.00C1394.09,632.47 1397.05,629.04 1400.50,627.80C1403.30,626.79 1405.95,626.01 1408.60,626.40C1411.39,626.81 1413.88,629.04 1416.80,630.50C1420.15,632.18 1423.39,634.42 1427.60,635.90C1432.95,637.78 1440.82,638.16 1446.60,640.00C1451.73,641.63 1456.00,644.00 1460.70,646.00" fill="none" stroke="#f4f4f4" stroke-width="1.8" stroke-linejoin="round"/>
<g font-family="Liberation Sans" font-size="11" fill="#c2c4c8" stroke="#c2c4c8" stroke-width="0.2"><text x="88" y="492.7" text-anchor="end">0.0100%</text><text x="88" y="525.8" text-anchor="end">0.0050%</text><text x="88" y="558.9" text-anchor="end">0%</text><text x="88" y="591.9" text-anchor="end">-0.0050%</text><text x="88" y="625.0" text-anchor="end">-0.0100%</text><text x="88" y="658.1" text-anchor="end">-0.0150%</text><text x="88" y="691.2" text-anchor="end">-0.0200%</text><text x="1475.5" y="498.0">$2.60</text><text x="1475.5" y="542.2">$2.40</text><text x="1475.5" y="587.4">$2.20</text><text x="1475.5" y="632.0">$2.00</text><text x="1475.5" y="676.5">$1.80</text><text x="1475.5" y="692.3">$1.73</text><text x="103.0" y="707.2" text-anchor="middle" font-size="11.7">3 Jan</text><text x="155.8" y="707.2" text-anchor="middle" font-size="11.7">4 Jan</text><text x="208.5" y="707.2" text-anchor="middle" font-size="11.7">4 Jan</text><text x="261.2" y="707.2" text-anchor="middle" font-size="11.7">5 Jan</text><text x="314.0" y="707.2" text-anchor="middle" font-size="11.7">6 Jan</text><text x="366.8" y="707.2" text-anchor="middle" font-size="11.7">6 Jan</text><text x="419.5" y="707.2" text-anchor="middle" font-size="11.7">7 Jan</text><text x="472.2" y="707.2" text-anchor="middle" font-size="11.7">8 Jan</text><text x="525.0" y="707.2" text-anchor="middle" font-size="11.7">8 Jan</text><text x="577.8" y="707.2" text-anchor="middle" font-size="11.7">9 Jan</text><text x="630.5" y="707.2" text-anchor="middle" font-size="11.7">10 Jan</text><text x="683.2" y="707.2" text-anchor="middle" font-size="11.7">10 Jan</text><text x="736.0" y="707.2" text-anchor="middle" font-size="11.7">11 Jan</text><text x="788.8" y="707.2" text-anchor="middle" font-size="11.7">12 Jan</text><text x="841.5" y="707.2" text-anchor="middle" font-size="11.7">12 Jan</text><text x="894.2" y="707.2" text-anchor="middle" font-size="11.7">13 Jan</text><text x="947.0" y="707.2" text-anchor="middle" font-size="11.7">14 Jan</text><text x="999.8" y="707.2" text-anchor="middle" font-size="11.7">14 Jan</text><text x="1052.5" y="707.2" text-anchor="middle" font-size="11.7">15 Jan</text><text x="1105.2" y="707.2" text-anchor="middle" font-size="11.7">16 Jan</text><text x="1158.0" y="707.2" text-anchor="middle" font-size="11.7">16 Jan</text><text x="1210.8" y="707.2" text-anchor="middle" font-size="11.7">17 Jan</text><text x="1263.5" y="707.2" text-anchor="middle" font-size="11.7">18 Jan</text><text x="1316.2" y="707.2" text-anchor="middle" font-size="11.7">18 Jan</text><text x="1369.0" y="707.2" text-anchor="middle" font-size="11.7">19 Jan</text><text x="1421.8" y="707.2" text-anchor="middle" font-size="11.7">20 Jan</text></g>
<path d="M98.8,757.2 L101.0,756.9 L103.3,756.6 L105.6,757.3 L107.9,756.4 L110.1,757.1 L112.4,756.8 L114.7,756.3 L117.0,757.0 L119.3,756.2 L121.5,756.8 L123.8,756.2 L126.1,756.2 L128.4,756.7 L130.7,757.3 L132.9,756.1 L135.2,756.3 L137.5,756.9 L139.8,757.4 L142.0,756.7 L144.3,756.4 L146.6,757.3 L148.9,755.8 L151.2,757.1 L153.4,756.1 L155.7,755.9 L158.0,756.4 L160.6,756.1 L163.2,756.7 L165.9,757.9 L168.5,757.7 L170.7,757.2 L172.9,757.8 L175.2,757.9 L177.4,757.5 L179.6,757.7 L181.8,756.9 L184.0,756.9 L186.2,757.1 L188.5,757.9 L190.7,757.5 L192.9,757.3 L195.1,757.7 L197.3,757.5 L199.5,757.2 L201.8,758.0 L204.0,757.8 L206.2,757.1 L208.4,757.6 L210.6,757.5 L212.8,758.1 L215.1,757.8 L217.3,757.1 L219.5,758.2 L221.7,756.8 L223.9,757.3 L226.1,757.8 L228.4,756.9 L230.6,757.4 L232.8,756.7 L235.0,757.6 L237.2,757.8 L239.4,757.5 L241.7,757.9 L243.9,757.0 L246.1,757.6 L248.3,757.5 L250.5,757.4 L252.7,757.2 L255.0,757.8 L257.2,758.0 L259.4,757.2 L261.6,757.5 L263.8,756.5 L266.0,757.6 L268.3,757.5 L270.5,758.0 L272.7,757.2 L275.1,757.3 L277.6,756.1 L280.0,756.0 L282.6,755.5 L285.2,755.3 L288.4,753.2 L291.7,750.5 L295.6,749.9 L298.4,749.3 L301.2,750.2 L304.0,750.5 L306.6,747.4 L309.3,745.3 L313.2,747.5 L316.1,746.9 L319.0,747.5 L323.0,746.2 L326.2,742.7 L329.5,740.6 L332.0,741.0 L335.3,731.2 L337.6,732.9 L339.9,733.6 L343.8,736.5 L347.1,734.0 L350.3,732.6 L352.9,733.6 L356.8,739.0 L359.4,735.2 L361.8,734.5 L364.3,734.3 L366.7,734.8 L369.1,733.2 L371.5,733.4 L374.0,733.2 L376.4,732.8 L379.6,735.3 L382.9,736.5 L385.2,737.4 L387.4,737.8 L389.7,737.3 L392.0,738.0 L395.9,735.8 L398.1,736.2 L400.4,736.6 L402.6,737.9 L404.8,738.5 L407.0,737.7 L409.3,738.3 L411.5,739.3 L413.8,737.8 L416.1,736.7 L418.3,736.0 L420.6,734.9 L423.2,735.0 L425.8,734.5 L428.4,734.1 L431.0,734.9 L435.0,736.7 L437.2,736.5 L439.5,736.4 L441.8,736.7 L444.0,736.5 L446.7,733.2 L449.3,734.3 L451.9,733.9 L455.1,729.3 L458.4,724.1 L460.7,724.9 L462.9,725.9 L465.2,726.8 L467.5,727.3 L470.0,726.3 L472.5,727.4 L475.0,727.0 L477.5,726.9 L480.0,726.0 L482.2,726.6 L484.4,726.0 L486.6,726.1 L488.8,725.8 L491.0,726.7 L493.2,725.9 L495.4,726.0 L497.6,726.3 L499.8,726.4 L502.0,727.0 L504.3,728.1 L506.7,729.0 L509.0,730.2 L511.3,731.8 L513.7,733.0 L516.0,735.0 L518.4,734.3 L520.8,733.3 L523.2,734.2 L525.6,733.4 L528.0,732.2 L530.4,731.9 L532.8,731.6 L535.2,731.2 L537.6,730.3 L540.0,730.5 L542.3,731.3 L544.6,731.7 L546.9,731.1 L549.2,731.4 L551.5,731.0 L553.8,731.2 L556.1,731.9 L558.4,732.0 L560.7,733.1 L563.0,732.8 L565.4,733.4 L567.8,734.4 L570.2,737.1 L572.6,737.6 L575.0,738.7 L577.3,735.0 L579.7,732.5 L582.0,729.3 L584.2,731.4 L586.5,735.0 L588.9,734.3 L591.2,734.3 L593.6,732.8 L596.2,734.9 L598.8,736.1 L601.4,736.8 L604.0,738.7 L606.2,738.1 L608.4,737.3 L610.7,737.9 L612.9,737.1 L615.1,737.1 L617.3,736.0 L619.6,735.4 L621.8,735.9 L624.0,735.0 L626.4,735.3 L628.7,734.0 L631.0,734.7 L633.4,734.8 L635.7,734.9 L638.0,735.0 L640.3,734.3 L642.7,734.9 L645.0,735.0 L647.4,735.4 L649.8,735.4 L652.2,736.0 L654.6,737.0 L657.0,738.0 L659.3,738.1 L661.7,739.2 L664.0,740.1 L666.3,739.8 L668.7,741.0 L671.0,741.6 L673.3,742.0 L675.7,741.5 L678.0,742.2 L680.3,741.2 L682.6,740.6 L684.9,739.9 L687.1,739.3 L689.4,739.4 L691.7,739.2 L694.0,738.0 L696.4,738.6 L698.8,738.1 L701.1,738.5 L703.5,738.8 L705.9,737.7 L708.3,738.7 L710.7,739.1 L713.0,739.0 L715.4,739.0 L717.8,738.7 L720.1,738.4 L722.4,737.7 L724.8,738.4 L727.1,737.5 L729.4,738.0 L731.7,738.0 L734.0,736.9 L736.4,736.6 L738.7,737.3 L741.0,736.3 L743.3,736.8 L745.7,736.1 L748.0,736.3 L750.3,736.5 L752.7,737.9 L755.0,737.9 L757.3,737.1 L759.7,738.3 L762.0,738.0 L764.4,738.0 L766.8,736.8 L769.2,735.5 L771.5,735.1 L773.9,733.7 L776.3,732.8 L778.7,732.8 L781.0,733.9 L783.4,733.7 L785.7,733.8 L788.0,734.8 L790.3,734.3 L792.7,735.3 L795.0,735.0 L797.5,735.6 L800.0,735.2 L802.3,735.0 L804.7,735.3 L807.0,735.6 L809.4,735.8 L811.7,736.6 L814.1,736.3 L816.4,736.9 L818.8,736.6 L821.1,738.1 L823.5,737.5 L825.8,738.0 L828.1,737.8 L830.5,737.9 L832.8,738.3 L835.2,737.4 L837.5,738.1 L839.9,737.3 L842.2,737.2 L844.5,737.1 L846.9,736.1 L849.2,736.7 L851.6,736.2 L853.9,735.7 L856.3,736.9 L858.6,736.3 L860.9,736.1 L863.3,736.9 L865.6,737.6 L868.0,737.6 L870.3,737.6 L872.6,738.2 L875.0,738.5 L877.3,739.2 L879.6,738.4 L882.0,739.5 L884.3,739.3 L886.7,739.6 L889.0,740.3 L891.4,740.0 L893.7,738.9 L896.0,738.3 L898.4,737.5 L900.7,737.8 L903.1,738.0 L905.4,737.2 L907.8,737.3 L910.1,737.1 L912.5,737.0 L914.8,737.2 L917.1,736.7 L919.5,736.8 L921.8,736.6 L924.2,737.3 L926.5,736.8 L928.9,737.0 L931.2,736.3 L933.6,735.6 L935.9,733.0 L938.2,732.0 L940.6,730.5 L942.9,730.2 L945.3,729.0 L947.6,726.9 L950.0,725.8 L952.3,725.3 L954.7,723.7 L957.0,723.4 L959.3,722.5 L961.7,721.8 L964.0,722.3 L966.4,722.0 L968.7,721.1 L971.0,722.3 L973.4,722.3 L975.8,724.1 L978.1,727.0 L980.5,726.9 L982.8,726.4 L985.1,725.2 L987.5,725.3 L989.8,726.8 L992.2,727.8 L994.5,727.5 L996.8,729.5 L999.2,729.5 L1001.5,730.5 L1003.9,729.4 L1006.2,729.1 L1008.5,727.7 L1010.9,725.6 L1013.2,724.9 L1015.6,723.9 L1017.9,724.1 L1020.3,724.0 L1022.6,724.0 L1025.0,724.4 L1027.3,725.3 L1029.7,724.3 L1032.0,725.3 L1034.3,725.9 L1036.7,726.2 L1039.0,726.0 L1041.4,727.0 L1043.8,728.0 L1046.1,728.3 L1048.5,728.1 L1050.8,729.3 L1053.1,729.9 L1055.5,729.5 L1057.8,729.6 L1060.2,728.1 L1062.5,728.2 L1064.8,727.7 L1067.2,728.7 L1069.5,728.1 L1071.8,728.2 L1074.2,728.5 L1076.5,729.4 L1078.9,730.7 L1081.2,730.5 L1083.5,730.8 L1085.9,729.6 L1088.2,729.2 L1090.6,730.2 L1093.0,729.4 L1095.3,729.4 L1097.7,728.2 L1100.0,727.9 L1102.4,728.6 L1104.7,728.1 L1107.0,727.6 L1109.4,726.7 L1111.7,727.7 L1114.1,726.8 L1116.4,726.2 L1118.7,727.0 L1121.1,726.1 L1123.4,727.6 L1125.8,726.6 L1128.1,728.1 L1130.5,727.8 L1132.8,728.1 L1135.1,728.2 L1137.5,729.0 L1139.8,730.0 L1142.1,729.3 L1144.5,729.5 L1146.8,730.5 L1149.4,730.5 L1152.0,730.4 L1154.3,729.7 L1156.6,729.1 L1158.9,728.9 L1161.2,728.4 L1163.4,728.3 L1165.7,728.1 L1168.0,727.8 L1170.3,727.8 L1172.6,728.4 L1174.8,727.9 L1177.1,728.5 L1179.4,728.2 L1181.7,728.7 L1184.0,728.4 L1186.2,729.0 L1188.5,729.6 L1191.0,734.8 L1193.3,734.2 L1195.6,735.6 L1197.9,735.5 L1200.2,735.1 L1202.5,735.8 L1204.8,736.7 L1207.1,735.6 L1209.4,736.4 L1211.8,736.5 L1214.1,735.4 L1216.5,735.1 L1218.9,735.2 L1221.2,734.1 L1223.6,733.8 L1225.9,733.7 L1228.3,733.8 L1230.7,732.3 L1233.0,732.7 L1235.4,731.7 L1237.8,732.5 L1240.1,732.8 L1242.5,732.8 L1244.9,733.2 L1247.3,733.1 L1249.6,733.7 L1252.0,734.0 L1254.4,735.5 L1256.8,735.2 L1259.1,735.4 L1261.5,736.4 L1263.7,735.4 L1265.9,736.2 L1268.1,735.9 L1270.4,735.2 L1272.6,734.2 L1274.8,733.7 L1277.0,733.8 L1279.2,733.9 L1281.4,734.6 L1283.6,734.6 L1285.8,735.6 L1288.0,735.8 L1290.2,737.4 L1292.5,737.9 L1294.7,737.7 L1296.9,737.7 L1299.1,739.3 L1301.3,738.7 L1303.5,739.3 L1305.7,740.0 L1308.3,738.4 L1310.9,738.3 L1313.5,737.7 L1315.8,737.7 L1318.1,737.8 L1320.5,737.4 L1322.8,737.9 L1325.1,737.2 L1327.4,737.7 L1329.8,737.4 L1332.1,738.0 L1334.4,738.2 L1336.6,737.6 L1338.9,737.8 L1341.1,738.4 L1343.3,738.4 L1345.6,739.1 L1347.8,739.2 L1350.0,739.7 L1352.2,739.7 L1354.5,740.0 L1356.7,740.4 L1358.9,739.8 L1361.2,739.9 L1363.4,741.1 L1365.6,739.9 L1367.9,741.0 L1370.1,741.0 L1372.3,740.2 L1374.6,741.7 L1376.8,741.9 L1379.0,741.6 L1381.2,741.6 L1383.6,742.0 L1385.9,742.1 L1388.3,741.0 L1390.6,741.6 L1393.0,741.6 L1395.3,742.1 L1397.7,742.1 L1400.0,742.1 L1402.3,741.7 L1404.7,742.2 L1407.0,741.9 L1409.4,741.9 L1411.7,741.2 L1414.1,740.8 L1416.4,741.6 L1418.8,740.0 L1421.2,739.4 L1423.6,738.0 L1425.9,738.1 L1428.3,736.7 L1430.7,735.6 L1433.3,737.1 L1436.0,738.2 L1438.3,738.4 L1440.5,738.5 L1442.8,738.2 L1445.1,737.4 L1447.4,738.7 L1449.7,738.6 L1451.9,738.2 L1454.2,738.2 L1456.7,738.5 L1459.2,738.9 L1461.8,738.2 L1464.3,739.4 L1466.8,738.9 L1469.3,739.5L1469.3,769L98.75,769Z" fill="#0d1120"/>
<rect x="1422.4" y="708.8" width="46.9" height="60" fill="#0a0f1c"/>
<clipPath id="win"><rect x="1422.4" y="708.8" width="46.9" height="60"/></clipPath>
<path d="M98.8,757.2 L101.0,756.9 L103.3,756.6 L105.6,757.3 L107.9,756.4 L110.1,757.1 L112.4,756.8 L114.7,756.3 L117.0,757.0 L119.3,756.2 L121.5,756.8 L123.8,756.2 L126.1,756.2 L128.4,756.7 L130.7,757.3 L132.9,756.1 L135.2,756.3 L137.5,756.9 L139.8,757.4 L142.0,756.7 L144.3,756.4 L146.6,757.3 L148.9,755.8 L151.2,757.1 L153.4,756.1 L155.7,755.9 L158.0,756.4 L160.6,756.1 L163.2,756.7 L165.9,757.9 L168.5,757.7 L170.7,757.2 L172.9,757.8 L175.2,757.9 L177.4,757.5 L179.6,757.7 L181.8,756.9 L184.0,756.9 L186.2,757.1 L188.5,757.9 L190.7,757.5 L192.9,757.3 L195.1,757.7 L197.3,757.5 L199.5,757.2 L201.8,758.0 L204.0,757.8 L206.2,757.1 L208.4,757.6 L210.6,757.5 L212.8,758.1 L215.1,757.8 L217.3,757.1 L219.5,758.2 L221.7,756.8 L223.9,757.3 L226.1,757.8 L228.4,756.9 L230.6,757.4 L232.8,756.7 L235.0,757.6 L237.2,757.8 L239.4,757.5 L241.7,757.9 L243.9,757.0 L246.1,757.6 L248.3,757.5 L250.5,757.4 L252.7,757.2 L255.0,757.8 L257.2,758.0 L259.4,757.2 L261.6,757.5 L263.8,756.5 L266.0,757.6 L268.3,757.5 L270.5,758.0 L272.7,757.2 L275.1,757.3 L277.6,756.1 L280.0,756.0 L282.6,755.5 L285.2,755.3 L288.4,753.2 L291.7,750.5 L295.6,749.9 L298.4,749.3 L301.2,750.2 L304.0,750.5 L306.6,747.4 L309.3,745.3 L313.2,747.5 L316.1,746.9 L319.0,747.5 L323.0,746.2 L326.2,742.7 L329.5,740.6 L332.0,741.0 L335.3,731.2 L337.6,732.9 L339.9,733.6 L343.8,736.5 L347.1,734.0 L350.3,732.6 L352.9,733.6 L356.8,739.0 L359.4,735.2 L361.8,734.5 L364.3,734.3 L366.7,734.8 L369.1,733.2 L371.5,733.4 L374.0,733.2 L376.4,732.8 L379.6,735.3 L382.9,736.5 L385.2,737.4 L387.4,737.8 L389.7,737.3 L392.0,738.0 L395.9,735.8 L398.1,736.2 L400.4,736.6 L402.6,737.9 L404.8,738.5 L407.0,737.7 L409.3,738.3 L411.5,739.3 L413.8,737.8 L416.1,736.7 L418.3,736.0 L420.6,734.9 L423.2,735.0 L425.8,734.5 L428.4,734.1 L431.0,734.9 L435.0,736.7 L437.2,736.5 L439.5,736.4 L441.8,736.7 L444.0,736.5 L446.7,733.2 L449.3,734.3 L451.9,733.9 L455.1,729.3 L458.4,724.1 L460.7,724.9 L462.9,725.9 L465.2,726.8 L467.5,727.3 L470.0,726.3 L472.5,727.4 L475.0,727.0 L477.5,726.9 L480.0,726.0 L482.2,726.6 L484.4,726.0 L486.6,726.1 L488.8,725.8 L491.0,726.7 L493.2,725.9 L495.4,726.0 L497.6,726.3 L499.8,726.4 L502.0,727.0 L504.3,728.1 L506.7,729.0 L509.0,730.2 L511.3,731.8 L513.7,733.0 L516.0,735.0 L518.4,734.3 L520.8,733.3 L523.2,734.2 L525.6,733.4 L528.0,732.2 L530.4,731.9 L532.8,731.6 L535.2,731.2 L537.6,730.3 L540.0,730.5 L542.3,731.3 L544.6,731.7 L546.9,731.1 L549.2,731.4 L551.5,731.0 L553.8,731.2 L556.1,731.9 L558.4,732.0 L560.7,733.1 L563.0,732.8 L565.4,733.4 L567.8,734.4 L570.2,737.1 L572.6,737.6 L575.0,738.7 L577.3,735.0 L579.7,732.5 L582.0,729.3 L584.2,731.4 L586.5,735.0 L588.9,734.3 L591.2,734.3 L593.6,732.8 L596.2,734.9 L598.8,736.1 L601.4,736.8 L604.0,738.7 L606.2,738.1 L608.4,737.3 L610.7,737.9 L612.9,737.1 L615.1,737.1 L617.3,736.0 L619.6,735.4 L621.8,735.9 L624.0,735.0 L626.4,735.3 L628.7,734.0 L631.0,734.7 L633.4,734.8 L635.7,734.9 L638.0,735.0 L640.3,734.3 L642.7,734.9 L645.0,735.0 L647.4,735.4 L649.8,735.4 L652.2,736.0 L654.6,737.0 L657.0,738.0 L659.3,738.1 L661.7,739.2 L664.0,740.1 L666.3,739.8 L668.7,741.0 L671.0,741.6 L673.3,742.0 L675.7,741.5 L678.0,742.2 L680.3,741.2 L682.6,740.6 L684.9,739.9 L687.1,739.3 L689.4,739.4 L691.7,739.2 L694.0,738.0 L696.4,738.6 L698.8,738.1 L701.1,738.5 L703.5,738.8 L705.9,737.7 L708.3,738.7 L710.7,739.1 L713.0,739.0 L715.4,739.0 L717.8,738.7 L720.1,738.4 L722.4,737.7 L724.8,738.4 L727.1,737.5 L729.4,738.0 L731.7,738.0 L734.0,736.9 L736.4,736.6 L738.7,737.3 L741.0,736.3 L743.3,736.8 L745.7,736.1 L748.0,736.3 L750.3,736.5 L752.7,737.9 L755.0,737.9 L757.3,737.1 L759.7,738.3 L762.0,738.0 L764.4,738.0 L766.8,736.8 L769.2,735.5 L771.5,735.1 L773.9,733.7 L776.3,732.8 L778.7,732.8 L781.0,733.9 L783.4,733.7 L785.7,733.8 L788.0,734.8 L790.3,734.3 L792.7,735.3 L795.0,735.0 L797.5,735.6 L800.0,735.2 L802.3,735.0 L804.7,735.3 L807.0,735.6 L809.4,735.8 L811.7,736.6 L814.1,736.3 L816.4,736.9 L818.8,736.6 L821.1,738.1 L823.5,737.5 L825.8,738.0 L828.1,737.8 L830.5,737.9 L832.8,738.3 L835.2,737.4 L837.5,738.1 L839.9,737.3 L842.2,737.2 L844.5,737.1 L846.9,736.1 L849.2,736.7 L851.6,736.2 L853.9,735.7 L856.3,736.9 L858.6,736.3 L860.9,736.1 L863.3,736.9 L865.6,737.6 L868.0,737.6 L870.3,737.6 L872.6,738.2 L875.0,738.5 L877.3,739.2 L879.6,738.4 L882.0,739.5 L884.3,739.3 L886.7,739.6 L889.0,740.3 L891.4,740.0 L893.7,738.9 L896.0,738.3 L898.4,737.5 L900.7,737.8 L903.1,738.0 L905.4,737.2 L907.8,737.3 L910.1,737.1 L912.5,737.0 L914.8,737.2 L917.1,736.7 L919.5,736.8 L921.8,736.6 L924.2,737.3 L926.5,736.8 L928.9,737.0 L931.2,736.3 L933.6,735.6 L935.9,733.0 L938.2,732.0 L940.6,730.5 L942.9,730.2 L945.3,729.0 L947.6,726.9 L950.0,725.8 L952.3,725.3 L954.7,723.7 L957.0,723.4 L959.3,722.5 L961.7,721.8 L964.0,722.3 L966.4,722.0 L968.7,721.1 L971.0,722.3 L973.4,722.3 L975.8,724.1 L978.1,727.0 L980.5,726.9 L982.8,726.4 L985.1,725.2 L987.5,725.3 L989.8,726.8 L992.2,727.8 L994.5,727.5 L996.8,729.5 L999.2,729.5 L1001.5,730.5 L1003.9,729.4 L1006.2,729.1 L1008.5,727.7 L1010.9,725.6 L1013.2,724.9 L1015.6,723.9 L1017.9,724.1 L1020.3,724.0 L1022.6,724.0 L1025.0,724.4 L1027.3,725.3 L1029.7,724.3 L1032.0,725.3 L1034.3,725.9 L1036.7,726.2 L1039.0,726.0 L1041.4,727.0 L1043.8,728.0 L1046.1,728.3 L1048.5,728.1 L1050.8,729.3 L1053.1,729.9 L1055.5,729.5 L1057.8,729.6 L1060.2,728.1 L1062.5,728.2 L1064.8,727.7 L1067.2,728.7 L1069.5,728.1 L1071.8,728.2 L1074.2,728.5 L1076.5,729.4 L1078.9,730.7 L1081.2,730.5 L1083.5,730.8 L1085.9,729.6 L1088.2,729.2 L1090.6,730.2 L1093.0,729.4 L1095.3,729.4 L1097.7,728.2 L1100.0,727.9 L1102.4,728.6 L1104.7,728.1 L1107.0,727.6 L1109.4,726.7 L1111.7,727.7 L1114.1,726.8 L1116.4,726.2 L1118.7,727.0 L1121.1,726.1 L1123.4,727.6 L1125.8,726.6 L1128.1,728.1 L1130.5,727.8 L1132.8,728.1 L1135.1,728.2 L1137.5,729.0 L1139.8,730.0 L1142.1,729.3 L1144.5,729.5 L1146.8,730.5 L1149.4,730.5 L1152.0,730.4 L1154.3,729.7 L1156.6,729.1 L1158.9,728.9 L1161.2,728.4 L1163.4,728.3 L1165.7,728.1 L1168.0,727.8 L1170.3,727.8 L1172.6,728.4 L1174.8,727.9 L1177.1,728.5 L1179.4,728.2 L1181.7,728.7 L1184.0,728.4 L1186.2,729.0 L1188.5,729.6 L1191.0,734.8 L1193.3,734.2 L1195.6,735.6 L1197.9,735.5 L1200.2,735.1 L1202.5,735.8 L1204.8,736.7 L1207.1,735.6 L1209.4,736.4 L1211.8,736.5 L1214.1,735.4 L1216.5,735.1 L1218.9,735.2 L1221.2,734.1 L1223.6,733.8 L1225.9,733.7 L1228.3,733.8 L1230.7,732.3 L1233.0,732.7 L1235.4,731.7 L1237.8,732.5 L1240.1,732.8 L1242.5,732.8 L1244.9,733.2 L1247.3,733.1 L1249.6,733.7 L1252.0,734.0 L1254.4,735.5 L1256.8,735.2 L1259.1,735.4 L1261.5,736.4 L1263.7,735.4 L1265.9,736.2 L1268.1,735.9 L1270.4,735.2 L1272.6,734.2 L1274.8,733.7 L1277.0,733.8 L1279.2,733.9 L1281.4,734.6 L1283.6,734.6 L1285.8,735.6 L1288.0,735.8 L1290.2,737.4 L1292.5,737.9 L1294.7,737.7 L1296.9,737.7 L1299.1,739.3 L1301.3,738.7 L1303.5,739.3 L1305.7,740.0 L1308.3,738.4 L1310.9,738.3 L1313.5,737.7 L1315.8,737.7 L1318.1,737.8 L1320.5,737.4 L1322.8,737.9 L1325.1,737.2 L1327.4,737.7 L1329.8,737.4 L1332.1,738.0 L1334.4,738.2 L1336.6,737.6 L1338.9,737.8 L1341.1,738.4 L1343.3,738.4 L1345.6,739.1 L1347.8,739.2 L1350.0,739.7 L1352.2,739.7 L1354.5,740.0 L1356.7,740.4 L1358.9,739.8 L1361.2,739.9 L1363.4,741.1 L1365.6,739.9 L1367.9,741.0 L1370.1,741.0 L1372.3,740.2 L1374.6,741.7 L1376.8,741.9 L1379.0,741.6 L1381.2,741.6 L1383.6,742.0 L1385.9,742.1 L1388.3,741.0 L1390.6,741.6 L1393.0,741.6 L1395.3,742.1 L1397.7,742.1 L1400.0,742.1 L1402.3,741.7 L1404.7,742.2 L1407.0,741.9 L1409.4,741.9 L1411.7,741.2 L1414.1,740.8 L1416.4,741.6 L1418.8,740.0 L1421.2,739.4 L1423.6,738.0 L1425.9,738.1 L1428.3,736.7 L1430.7,735.6 L1433.3,737.1 L1436.0,738.2 L1438.3,738.4 L1440.5,738.5 L1442.8,738.2 L1445.1,737.4 L1447.4,738.7 L1449.7,738.6 L1451.9,738.2 L1454.2,738.2 L1456.7,738.5 L1459.2,738.9 L1461.8,738.2 L1464.3,739.4 L1466.8,738.9 L1469.3,739.5L1469.3,769L98.75,769Z" fill="#212a46" clip-path="url(#win)"/>
<path d="M98.8,757.2 L101.0,756.9 L103.3,756.6 L105.6,757.3 L107.9,756.4 L110.1,757.1 L112.4,756.8 L114.7,756.3 L117.0,757.0 L119.3,756.2 L121.5,756.8 L123.8,756.2 L126.1,756.2 L128.4,756.7 L130.7,757.3 L132.9,756.1 L135.2,756.3 L137.5,756.9 L139.8,757.4 L142.0,756.7 L144.3,756.4 L146.6,757.3 L148.9,755.8 L151.2,757.1 L153.4,756.1 L155.7,755.9 L158.0,756.4 L160.6,756.1 L163.2,756.7 L165.9,757.9 L168.5,757.7 L170.7,757.2 L172.9,757.8 L175.2,757.9 L177.4,757.5 L179.6,757.7 L181.8,756.9 L184.0,756.9 L186.2,757.1 L188.5,757.9 L190.7,757.5 L192.9,757.3 L195.1,757.7 L197.3,757.5 L199.5,757.2 L201.8,758.0 L204.0,757.8 L206.2,757.1 L208.4,757.6 L210.6,757.5 L212.8,758.1 L215.1,757.8 L217.3,757.1 L219.5,758.2 L221.7,756.8 L223.9,757.3 L226.1,757.8 L228.4,756.9 L230.6,757.4 L232.8,756.7 L235.0,757.6 L237.2,757.8 L239.4,757.5 L241.7,757.9 L243.9,757.0 L246.1,757.6 L248.3,757.5 L250.5,757.4 L252.7,757.2 L255.0,757.8 L257.2,758.0 L259.4,757.2 L261.6,757.5 L263.8,756.5 L266.0,757.6 L268.3,757.5 L270.5,758.0 L272.7,757.2 L275.1,757.3 L277.6,756.1 L280.0,756.0 L282.6,755.5 L285.2,755.3 L288.4,753.2 L291.7,750.5 L295.6,749.9 L298.4,749.3 L301.2,750.2 L304.0,750.5 L306.6,747.4 L309.3,745.3 L313.2,747.5 L316.1,746.9 L319.0,747.5 L323.0,746.2 L326.2,742.7 L329.5,740.6 L332.0,741.0 L335.3,731.2 L337.6,732.9 L339.9,733.6 L343.8,736.5 L347.1,734.0 L350.3,732.6 L352.9,733.6 L356.8,739.0 L359.4,735.2 L361.8,734.5 L364.3,734.3 L366.7,734.8 L369.1,733.2 L371.5,733.4 L374.0,733.2 L376.4,732.8 L379.6,735.3 L382.9,736.5 L385.2,737.4 L387.4,737.8 L389.7,737.3 L392.0,738.0 L395.9,735.8 L398.1,736.2 L400.4,736.6 L402.6,737.9 L404.8,738.5 L407.0,737.7 L409.3,738.3 L411.5,739.3 L413.8,737.8 L416.1,736.7 L418.3,736.0 L420.6,734.9 L423.2,735.0 L425.8,734.5 L428.4,734.1 L431.0,734.9 L435.0,736.7 L437.2,736.5 L439.5,736.4 L441.8,736.7 L444.0,736.5 L446.7,733.2 L449.3,734.3 L451.9,733.9 L455.1,729.3 L458.4,724.1 L460.7,724.9 L462.9,725.9 L465.2,726.8 L467.5,727.3 L470.0,726.3 L472.5,727.4 L475.0,727.0 L477.5,726.9 L480.0,726.0 L482.2,726.6 L484.4,726.0 L486.6,726.1 L488.8,725.8 L491.0,726.7 L493.2,725.9 L495.4,726.0 L497.6,726.3 L499.8,726.4 L502.0,727.0 L504.3,728.1 L506.7,729.0 L509.0,730.2 L511.3,731.8 L513.7,733.0 L516.0,735.0 L518.4,734.3 L520.8,733.3 L523.2,734.2 L525.6,733.4 L528.0,732.2 L530.4,731.9 L532.8,731.6 L535.2,731.2 L537.6,730.3 L540.0,730.5 L542.3,731.3 L544.6,731.7 L546.9,731.1 L549.2,731.4 L551.5,731.0 L553.8,731.2 L556.1,731.9 L558.4,732.0 L560.7,733.1 L563.0,732.8 L565.4,733.4 L567.8,734.4 L570.2,737.1 L572.6,737.6 L575.0,738.7 L577.3,735.0 L579.7,732.5 L582.0,729.3 L584.2,731.4 L586.5,735.0 L588.9,734.3 L591.2,734.3 L593.6,732.8 L596.2,734.9 L598.8,736.1 L601.4,736.8 L604.0,738.7 L606.2,738.1 L608.4,737.3 L610.7,737.9 L612.9,737.1 L615.1,737.1 L617.3,736.0 L619.6,735.4 L621.8,735.9 L624.0,735.0 L626.4,735.3 L628.7,734.0 L631.0,734.7 L633.4,734.8 L635.7,734.9 L638.0,735.0 L640.3,734.3 L642.7,734.9 L645.0,735.0 L647.4,735.4 L649.8,735.4 L652.2,736.0 L654.6,737.0 L657.0,738.0 L659.3,738.1 L661.7,739.2 L664.0,740.1 L666.3,739.8 L668.7,741.0 L671.0,741.6 L673.3,742.0 L675.7,741.5 L678.0,742.2 L680.3,741.2 L682.6,740.6 L684.9,739.9 L687.1,739.3 L689.4,739.4 L691.7,739.2 L694.0,738.0 L696.4,738.6 L698.8,738.1 L701.1,738.5 L703.5,738.8 L705.9,737.7 L708.3,738.7 L710.7,739.1 L713.0,739.0 L715.4,739.0 L717.8,738.7 L720.1,738.4 L722.4,737.7 L724.8,738.4 L727.1,737.5 L729.4,738.0 L731.7,738.0 L734.0,736.9 L736.4,736.6 L738.7,737.3 L741.0,736.3 L743.3,736.8 L745.7,736.1 L748.0,736.3 L750.3,736.5 L752.7,737.9 L755.0,737.9 L757.3,737.1 L759.7,738.3 L762.0,738.0 L764.4,738.0 L766.8,736.8 L769.2,735.5 L771.5,735.1 L773.9,733.7 L776.3,732.8 L778.7,732.8 L781.0,733.9 L783.4,733.7 L785.7,733.8 L788.0,734.8 L790.3,734.3 L792.7,735.3 L795.0,735.0 L797.5,735.6 L800.0,735.2 L802.3,735.0 L804.7,735.3 L807.0,735.6 L809.4,735.8 L811.7,736.6 L814.1,736.3 L816.4,736.9 L818.8,736.6 L821.1,738.1 L823.5,737.5 L825.8,738.0 L828.1,737.8 L830.5,737.9 L832.8,738.3 L835.2,737.4 L837.5,738.1 L839.9,737.3 L842.2,737.2 L844.5,737.1 L846.9,736.1 L849.2,736.7 L851.6,736.2 L853.9,735.7 L856.3,736.9 L858.6,736.3 L860.9,736.1 L863.3,736.9 L865.6,737.6 L868.0,737.6 L870.3,737.6 L872.6,738.2 L875.0,738.5 L877.3,739.2 L879.6,738.4 L882.0,739.5 L884.3,739.3 L886.7,739.6 L889.0,740.3 L891.4,740.0 L893.7,738.9 L896.0,738.3 L898.4,737.5 L900.7,737.8 L903.1,738.0 L905.4,737.2 L907.8,737.3 L910.1,737.1 L912.5,737.0 L914.8,737.2 L917.1,736.7 L919.5,736.8 L921.8,736.6 L924.2,737.3 L926.5,736.8 L928.9,737.0 L931.2,736.3 L933.6,735.6 L935.9,733.0 L938.2,732.0 L940.6,730.5 L942.9,730.2 L945.3,729.0 L947.6,726.9 L950.0,725.8 L952.3,725.3 L954.7,723.7 L957.0,723.4 L959.3,722.5 L961.7,721.8 L964.0,722.3 L966.4,722.0 L968.7,721.1 L971.0,722.3 L973.4,722.3 L975.8,724.1 L978.1,727.0 L980.5,726.9 L982.8,726.4 L985.1,725.2 L987.5,725.3 L989.8,726.8 L992.2,727.8 L994.5,727.5 L996.8,729.5 L999.2,729.5 L1001.5,730.5 L1003.9,729.4 L1006.2,729.1 L1008.5,727.7 L1010.9,725.6 L1013.2,724.9 L1015.6,723.9 L1017.9,724.1 L1020.3,724.0 L1022.6,724.0 L1025.0,724.4 L1027.3,725.3 L1029.7,724.3 L1032.0,725.3 L1034.3,725.9 L1036.7,726.2 L1039.0,726.0 L1041.4,727.0 L1043.8,728.0 L1046.1,728.3 L1048.5,728.1 L1050.8,729.3 L1053.1,729.9 L1055.5,729.5 L1057.8,729.6 L1060.2,728.1 L1062.5,728.2 L1064.8,727.7 L1067.2,728.7 L1069.5,728.1 L1071.8,728.2 L1074.2,728.5 L1076.5,729.4 L1078.9,730.7 L1081.2,730.5 L1083.5,730.8 L1085.9,729.6 L1088.2,729.2 L1090.6,730.2 L1093.0,729.4 L1095.3,729.4 L1097.7,728.2 L1100.0,727.9 L1102.4,728.6 L1104.7,728.1 L1107.0,727.6 L1109.4,726.7 L1111.7,727.7 L1114.1,726.8 L1116.4,726.2 L1118.7,727.0 L1121.1,726.1 L1123.4,727.6 L1125.8,726.6 L1128.1,728.1 L1130.5,727.8 L1132.8,728.1 L1135.1,728.2 L1137.5,729.0 L1139.8,730.0 L1142.1,729.3 L1144.5,729.5 L1146.8,730.5 L1149.4,730.5 L1152.0,730.4 L1154.3,729.7 L1156.6,729.1 L1158.9,728.9 L1161.2,728.4 L1163.4,728.3 L1165.7,728.1 L1168.0,727.8 L1170.3,727.8 L1172.6,728.4 L1174.8,727.9 L1177.1,728.5 L1179.4,728.2 L1181.7,728.7 L1184.0,728.4 L1186.2,729.0 L1188.5,729.6 L1191.0,734.8 L1193.3,734.2 L1195.6,735.6 L1197.9,735.5 L1200.2,735.1 L1202.5,735.8 L1204.8,736.7 L1207.1,735.6 L1209.4,736.4 L1211.8,736.5 L1214.1,735.4 L1216.5,735.1 L1218.9,735.2 L1221.2,734.1 L1223.6,733.8 L1225.9,733.7 L1228.3,733.8 L1230.7,732.3 L1233.0,732.7 L1235.4,731.7 L1237.8,732.5 L1240.1,732.8 L1242.5,732.8 L1244.9,733.2 L1247.3,733.1 L1249.6,733.7 L1252.0,734.0 L1254.4,735.5 L1256.8,735.2 L1259.1,735.4 L1261.5,736.4 L1263.7,735.4 L1265.9,736.2 L1268.1,735.9 L1270.4,735.2 L1272.6,734.2 L1274.8,733.7 L1277.0,733.8 L1279.2,733.9 L1281.4,734.6 L1283.6,734.6 L1285.8,735.6 L1288.0,735.8 L1290.2,737.4 L1292.5,737.9 L1294.7,737.7 L1296.9,737.7 L1299.1,739.3 L1301.3,738.7 L1303.5,739.3 L1305.7,740.0 L1308.3,738.4 L1310.9,738.3 L1313.5,737.7 L1315.8,737.7 L1318.1,737.8 L1320.5,737.4 L1322.8,737.9 L1325.1,737.2 L1327.4,737.7 L1329.8,737.4 L1332.1,738.0 L1334.4,738.2 L1336.6,737.6 L1338.9,737.8 L1341.1,738.4 L1343.3,738.4 L1345.6,739.1 L1347.8,739.2 L1350.0,739.7 L1352.2,739.7 L1354.5,740.0 L1356.7,740.4 L1358.9,739.8 L1361.2,739.9 L1363.4,741.1 L1365.6,739.9 L1367.9,741.0 L1370.1,741.0 L1372.3,740.2 L1374.6,741.7 L1376.8,741.9 L1379.0,741.6 L1381.2,741.6 L1383.6,742.0 L1385.9,742.1 L1388.3,741.0 L1390.6,741.6 L1393.0,741.6 L1395.3,742.1 L1397.7,742.1 L1400.0,742.1 L1402.3,741.7 L1404.7,742.2 L1407.0,741.9 L1409.4,741.9 L1411.7,741.2 L1414.1,740.8 L1416.4,741.6 L1418.8,740.0 L1421.2,739.4 L1423.6,738.0 L1425.9,738.1 L1428.3,736.7 L1430.7,735.6 L1433.3,737.1 L1436.0,738.2 L1438.3,738.4 L1440.5,738.5 L1442.8,738.2 L1445.1,737.4 L1447.4,738.7 L1449.7,738.6 L1451.9,738.2 L1454.2,738.2 L1456.7,738.5 L1459.2,738.9 L1461.8,738.2 L1464.3,739.4 L1466.8,738.9 L1469.3,739.5" fill="none" stroke="#2e4a8f" stroke-width="1"/>
<rect x="1416.4" y="731.7" width="14.3" height="17" rx="6" fill="#363842"/>
<rect x="1461.5" y="731.7" width="14" height="17" rx="6" fill="#363842"/>
<g stroke="#a9abb2" stroke-width="1"><line x1="1422" y1="737" x2="1422" y2="743.5"/><line x1="1424.8" y1="737" x2="1424.8" y2="743.5"/><line x1="1467" y1="737" x2="1467" y2="743.5"/><line x1="1469.8" y1="737" x2="1469.8" y2="743.5"/></g>
</svg>
</body></html>
